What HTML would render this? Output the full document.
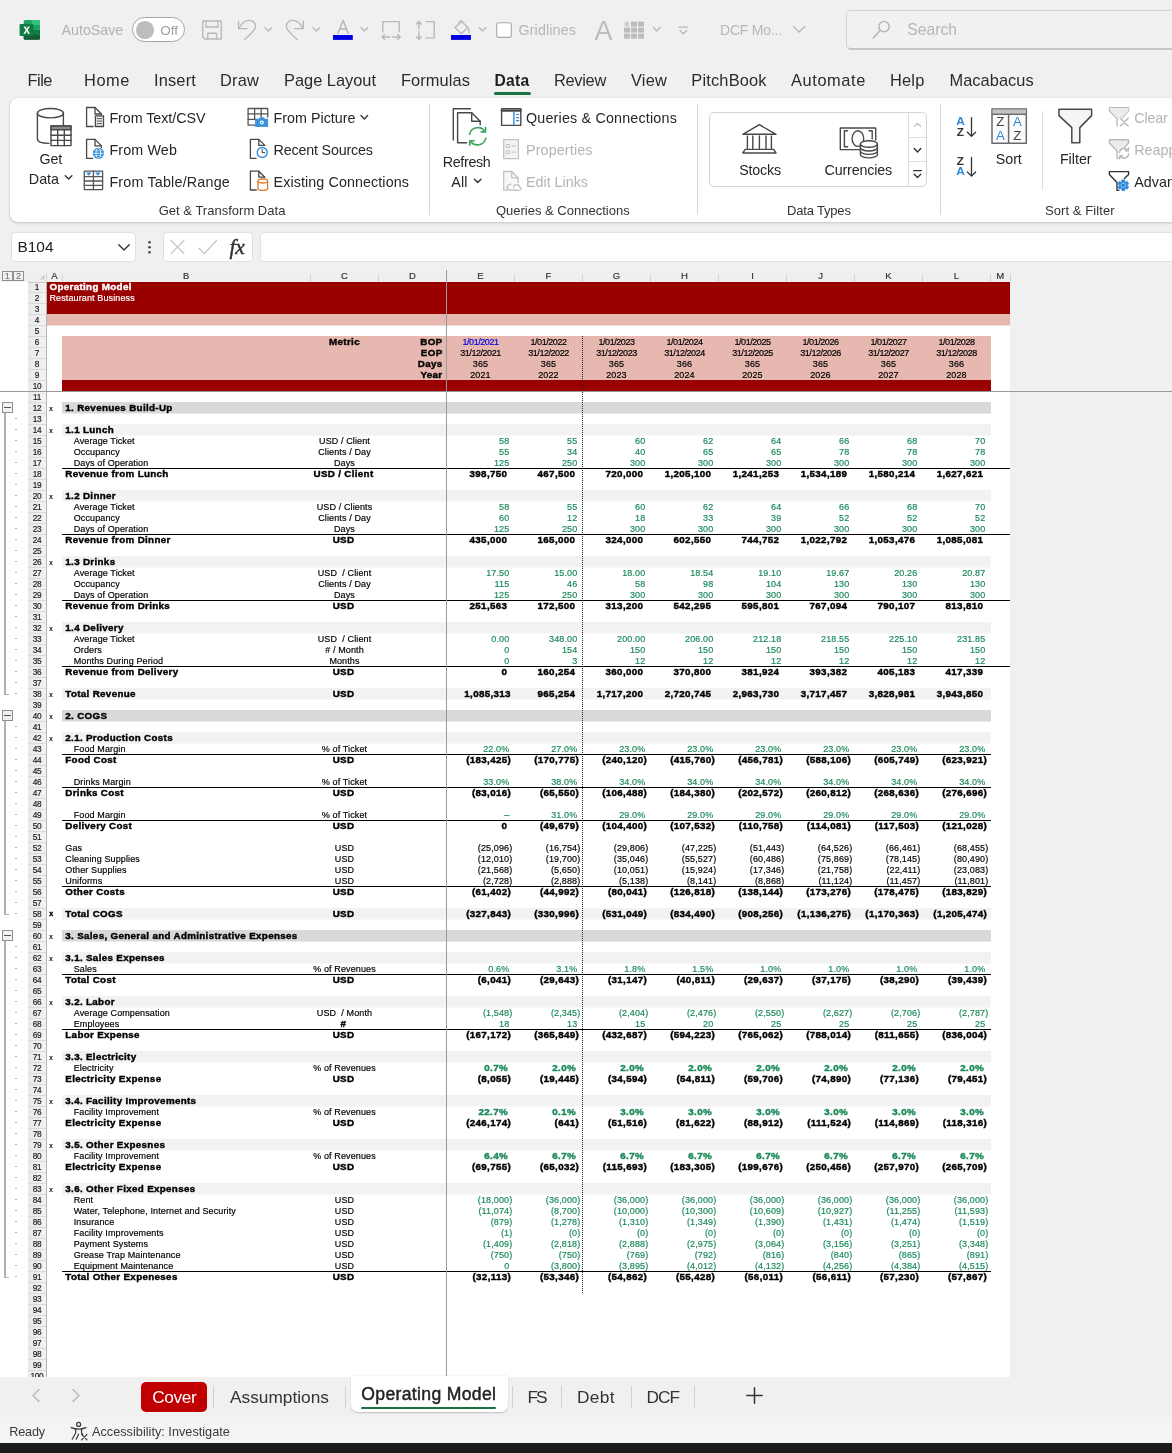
<!DOCTYPE html>
<html><head><meta charset="utf-8"><title>Excel</title>
<style>
html,body{margin:0;padding:0;}
body{width:1172px;height:1453px;overflow:hidden;background:#f0f0f0;font-family:"Liberation Sans",sans-serif;}
#app{position:relative;width:1172px;height:1453px;overflow:hidden;background:#f0f0f0;}
#sheet{position:absolute;left:0;top:0;width:1172px;height:1377px;overflow:hidden;pointer-events:none;}
.bx{position:absolute;}
.t{position:absolute;height:11px;line-height:11px;font-size:9px;letter-spacing:0.12px;white-space:nowrap;color:#000;overflow:visible;margin-top:0.8px;-webkit-text-stroke:0.18px currentColor;}
.t.b{font-weight:bold;font-size:9.8px;letter-spacing:0.33px;margin-top:0px;-webkit-text-stroke:0.42px currentColor;}
.t.c{text-align:center;}
.t.r{text-align:right;}
.t.w{color:#fff;}
.t.g{color:#1b8a5a;}
.t.blue{color:#0000e6;}
.t.ch{text-align:center;font-size:9.5px;color:#333;letter-spacing:0;}
.t.rh{text-align:center;font-size:8.3px;color:#222;letter-spacing:-0.35px;}
.t.xs{font-size:7px;letter-spacing:0;}
.t.ol{text-align:center;font-size:8.5px;color:#777;letter-spacing:0;}
.rt{position:absolute;white-space:nowrap;}
.t.dt{letter-spacing:-0.45px;}
#app{will-change:transform;}

</style></head><body>
<div id="app">
<div class="rt" style="left:61.60px;top:22.85px;font-size:14.30px;line-height:14.30px;color:#b2b2b2;letter-spacing:-0.039px;">AutoSave</div>
<div class="bx" style="left:132.20px;top:16.90px;width:53.10px;height:24.70px;box-sizing:border-box;border:1.3px solid #a6a6a6;border-radius:13px;background:#fff;"></div>
<div class="bx" style="left:136.20px;top:21.00px;width:17.60px;height:17.60px;border-radius:50%;background:#bdbdbd;"></div>
<div class="rt" style="left:160.30px;top:23.70px;font-size:13.60px;line-height:13.60px;color:#a0a0a0;letter-spacing:-0.063px;">Off</div>
<div class="rt" style="left:518.50px;top:22.85px;font-size:14.30px;line-height:14.30px;color:#b6b6b6;letter-spacing:0.119px;">Gridlines</div>
<div class="rt" style="left:594.50px;top:17.50px;font-size:27.00px;line-height:27.00px;color:#bcbcbc;letter-spacing:-0.910px;">A</div>
<div class="rt" style="left:720.00px;top:23.00px;font-size:14.00px;line-height:14.00px;color:#b8b8b8;letter-spacing:-0.198px;">DCF Mo...</div>
<div class="bx" style="left:846.00px;top:10.20px;width:344.00px;height:40.20px;box-sizing:border-box;border:1px solid #d4d4d4;border-bottom:2px solid #c6c6c6;border-radius:5px;background:#f1f1f1;"></div>
<div class="rt" style="left:907.30px;top:21.66px;font-size:15.69px;line-height:15.69px;color:#b6b6b6;">Search</div>
<div class="rt" style="left:27.40px;top:71.80px;font-size:16.40px;line-height:16.40px;color:#2b2b2b;letter-spacing:-0.457px;">File</div>
<div class="rt" style="left:84.00px;top:71.80px;font-size:16.40px;line-height:16.40px;color:#2b2b2b;letter-spacing:0.563px;">Home</div>
<div class="rt" style="left:154.00px;top:71.80px;font-size:16.40px;line-height:16.40px;color:#2b2b2b;letter-spacing:0.164px;">Insert</div>
<div class="rt" style="left:220.00px;top:71.80px;font-size:16.40px;line-height:16.40px;color:#2b2b2b;letter-spacing:0.182px;">Draw</div>
<div class="rt" style="left:284.00px;top:71.80px;font-size:16.40px;line-height:16.40px;color:#2b2b2b;letter-spacing:-0.009px;">Page Layout</div>
<div class="rt" style="left:401.00px;top:71.80px;font-size:16.40px;line-height:16.40px;color:#2b2b2b;letter-spacing:0.081px;">Formulas</div>
<div class="rt" style="left:554.00px;top:71.80px;font-size:16.40px;line-height:16.40px;color:#2b2b2b;letter-spacing:-0.296px;">Review</div>
<div class="rt" style="left:631.00px;top:71.80px;font-size:16.40px;line-height:16.40px;color:#2b2b2b;letter-spacing:0.187px;">View</div>
<div class="rt" style="left:691.30px;top:71.80px;font-size:16.40px;line-height:16.40px;color:#2b2b2b;letter-spacing:0.184px;">PitchBook</div>
<div class="rt" style="left:791.00px;top:71.80px;font-size:16.40px;line-height:16.40px;color:#2b2b2b;letter-spacing:0.600px;">Automate</div>
<div class="rt" style="left:890.00px;top:71.80px;font-size:16.40px;line-height:16.40px;color:#2b2b2b;letter-spacing:0.192px;">Help</div>
<div class="rt" style="left:949.50px;top:71.80px;font-size:16.40px;line-height:16.40px;color:#2b2b2b;letter-spacing:0.048px;">Macabacus</div>
<div class="rt" style="left:494.50px;top:72.70px;font-size:15.60px;line-height:15.60px;color:#1f1f1f;font-weight:bold;letter-spacing:0.321px;">Data</div>
<div class="bx" style="left:494.00px;top:91.80px;width:37.00px;height:3.20px;background:#1a7343;border-radius:1.5px;"></div>
<div class="bx" style="left:10.00px;top:97.60px;width:1190.00px;height:124.40px;background:#fff;border-radius:8px;box-shadow:0 1px 3px rgba(0,0,0,0.18),0 0 1px rgba(0,0,0,0.12);"></div>
<div class="bx" style="left:428.50px;top:104.00px;width:1.00px;height:111.00px;background:#d6d6d6;"></div>
<div class="bx" style="left:697.10px;top:104.00px;width:1.00px;height:111.00px;background:#d6d6d6;"></div>
<div class="bx" style="left:939.90px;top:104.00px;width:1.00px;height:111.00px;background:#d6d6d6;"></div>
<div class="bx" style="left:1042.00px;top:111.00px;width:1.00px;height:79.00px;background:#dcdcdc;"></div>
<div class="rt" style="left:39.50px;top:151.85px;font-size:14.30px;line-height:14.30px;color:#262626;letter-spacing:-0.150px;">Get</div>
<div class="rt" style="left:28.80px;top:171.85px;font-size:14.30px;line-height:14.30px;color:#262626;letter-spacing:0.023px;">Data</div>
<div class="rt" style="left:109.40px;top:110.85px;font-size:14.30px;line-height:14.30px;color:#262626;letter-spacing:-0.045px;">From Text/CSV</div>
<div class="rt" style="left:109.40px;top:142.85px;font-size:14.30px;line-height:14.30px;color:#262626;letter-spacing:0.140px;">From Web</div>
<div class="rt" style="left:109.40px;top:174.85px;font-size:14.30px;line-height:14.30px;color:#262626;letter-spacing:0.201px;">From Table/Range</div>
<div class="rt" style="left:273.60px;top:110.85px;font-size:14.30px;line-height:14.30px;color:#262626;">From Picture</div>
<div class="rt" style="left:273.60px;top:142.85px;font-size:14.30px;line-height:14.30px;color:#262626;letter-spacing:-0.182px;">Recent Sources</div>
<div class="rt" style="left:273.60px;top:174.85px;font-size:14.30px;line-height:14.30px;color:#262626;letter-spacing:0.093px;">Existing Connections</div>
<div class="rt" style="left:158.70px;top:204.00px;font-size:13.00px;line-height:13.00px;color:#333;letter-spacing:0.013px;">Get &amp; Transform Data</div>
<div class="rt" style="left:442.70px;top:154.85px;font-size:14.30px;line-height:14.30px;color:#262626;letter-spacing:-0.325px;">Refresh</div>
<div class="rt" style="left:451.20px;top:174.85px;font-size:14.30px;line-height:14.30px;color:#262626;letter-spacing:0.236px;">All</div>
<div class="rt" style="left:526.00px;top:110.85px;font-size:14.30px;line-height:14.30px;color:#262626;letter-spacing:0.188px;">Queries &amp; Connections</div>
<div class="rt" style="left:526.00px;top:142.85px;font-size:14.30px;line-height:14.30px;color:#b4b4b4;letter-spacing:0.142px;">Properties</div>
<div class="rt" style="left:526.00px;top:174.85px;font-size:14.30px;line-height:14.30px;color:#b4b4b4;">Edit Links</div>
<div class="rt" style="left:495.90px;top:204.00px;font-size:13.00px;line-height:13.00px;color:#333;letter-spacing:0.005px;">Queries &amp; Connections</div>
<div class="bx" style="left:709.20px;top:112.20px;width:217.70px;height:74.40px;box-sizing:border-box;border:1px solid #d4d4d4;border-radius:5px;background:#fff;"></div>
<div class="bx" style="left:908.00px;top:112.70px;width:1.00px;height:73.30px;background:#dcdcdc;"></div>
<div class="bx" style="left:908.50px;top:137.30px;width:17.90px;height:1.00px;background:#dcdcdc;"></div>
<div class="bx" style="left:908.50px;top:161.40px;width:17.90px;height:1.00px;background:#dcdcdc;"></div>
<div class="rt" style="left:739.30px;top:162.85px;font-size:14.30px;line-height:14.30px;color:#262626;letter-spacing:-0.219px;">Stocks</div>
<div class="rt" style="left:824.50px;top:162.85px;font-size:14.30px;line-height:14.30px;color:#262626;letter-spacing:-0.154px;">Currencies</div>
<div class="rt" style="left:787.00px;top:204.00px;font-size:13.00px;line-height:13.00px;color:#333;letter-spacing:-0.182px;">Data Types</div>
<div class="rt" style="left:995.80px;top:151.85px;font-size:14.30px;line-height:14.30px;color:#262626;letter-spacing:-0.057px;">Sort</div>
<div class="rt" style="left:1059.90px;top:151.85px;font-size:14.30px;line-height:14.30px;color:#262626;letter-spacing:-0.013px;">Filter</div>
<div class="rt" style="left:1134.30px;top:110.85px;font-size:14.30px;line-height:14.30px;color:#b4b4b4;letter-spacing:-0.175px;">Clear</div>
<div class="rt" style="left:1134.30px;top:142.85px;font-size:14.30px;line-height:14.30px;color:#b4b4b4;">Reapply</div>
<div class="rt" style="left:1134.30px;top:174.85px;font-size:14.30px;line-height:14.30px;color:#262626;">Advanced</div>
<div class="rt" style="left:1045.00px;top:204.00px;font-size:13.00px;line-height:13.00px;color:#333;letter-spacing:0.075px;">Sort &amp; Filter</div>
<div class="bx" style="left:11.00px;top:232.30px;width:125.00px;height:29.70px;box-sizing:border-box;border:1px solid #e1e1e1;border-radius:4px;background:#fff;"></div>
<div class="rt" style="left:17.50px;top:238.79px;font-size:15.41px;line-height:15.41px;color:#222;">B104</div>
<div class="bx" style="left:162.50px;top:232.30px;width:90.50px;height:29.70px;box-sizing:border-box;border:1px solid #e1e1e1;border-radius:4px;background:#fff;"></div>
<div class="bx" style="left:260.00px;top:232.30px;width:930.00px;height:29.70px;box-sizing:border-box;border:1px solid #e1e1e1;border-radius:4px;background:#fff;"></div>
<div class="rt" style="left:229.5px;top:234.5px;font-family:'Liberation Serif',serif;font-style:italic;font-weight:normal;-webkit-text-stroke:0.45px #333;font-size:21.5px;line-height:24px;color:#333;letter-spacing:-0.3px;">fx</div>
<svg class="bx" style="left:0;top:0" width="1172" height="270" viewBox="0 0 1172 270" fill="none" stroke-linecap="round" stroke-linejoin="round">
<defs>
<linearGradient id="xg" x1="0" y1="0" x2="1" y2="1"><stop offset="0" stop-color="#21a366"/><stop offset="1" stop-color="#107c41"/></linearGradient>
</defs>
<!-- Excel logo -->
<g stroke="none">
<rect x="23.7" y="20" width="16.3" height="19.7" rx="1.6" fill="#21a366"/>
<rect x="31.8" y="20" width="8.2" height="5" fill="#33c481"/>
<rect x="23.7" y="25" width="8.1" height="5" fill="#107c41"/>
<rect x="31.8" y="30" width="8.2" height="5" fill="#107c41"/>
<rect x="23.7" y="30" width="8.1" height="5" fill="#185c37"/>
<rect x="23.7" y="35" width="16.3" height="4.7" rx="1" fill="#185c37"/>
<rect x="19.6" y="24.1" width="13.9" height="11.9" rx="1.2" fill="#107c41"/>
<path d="M23.6 26.4h2l1.2 2.3 1.2-2.3h1.9l-2.1 3.6 2.2 3.7h-2l-1.3-2.5-1.3 2.5h-1.9l2.2-3.7z" fill="#fff"/>
</g>
<!-- QAT icons (disabled grey) -->
<g stroke="#b9b9b9" stroke-width="1.4">
<!-- save -->
<path d="M202.7 21h18.6v18h-16.6l-2-2z"/><path d="M206 21v6h12v-6"/><path d="M207.7 39v-5.8h8.9v5.8"/>
<!-- undo -->
<path d="M238.6 21.2v7.4h8.6"/><path d="M239.4 27.6c2.5-4.6 6.8-7.6 10.6-7.2 3.6.4 6.2 3.4 5.3 7.2-.7 3-5 6.700-10.6 12"/>
<path d="M265 27.8l3.400 3.300 3.400-3.300"/>
<!-- redo -->
<path d="M303.300 21.200v7.400h-8.600"/><path d="M302.500 27.600c-2.500-4.600-6.800-7.600-10.600-7.200-3.600.4-6.200 3.400-5.300 7.200.7 3 5 6.700 10.600 12"/>
<path d="M313 27.800l3.400 3.300 3.400-3.300"/>
<!-- font color A chevron -->
<path d="M361 27.600l3.400 3.300 3.400-3.300"/>
<!-- autofit col -->
<path d="M382.800 31.800v-10.200h16.400v10.200"/><path d="M382 37h7.800M384.600 34.600l-2.600 2.400 2.600 2.400"/><path d="M400.200 37h-7.800M397.600 34.600l2.600 2.400-2.600 2.400"/>
<!-- autofit row -->
<path d="M426 21.600h8.200v16.300h-8.200"/><path d="M418.900 21.400v7.600M416.500 24l2.400-2.600 2.400 2.600"/><path d="M418.900 39.400v-7.600M416.500 36.800l2.400 2.600 2.400-2.600"/>
<!-- paint bucket -->
<path d="M461.500 21.200l6.200 6.400-6.400 6.200-6.200-6.300z"/><path d="M458.800 24.200c-.6-2.600 2.600-4.400 3.800-2.200"/><path d="M467.900 27.800c1.200 1.600 1.800 3 1.200 4.800"/>
<path d="M479.200 27.600l3.400 3.300 3.400-3.300"/>
<!-- grid chevron -->
<path d="M653.500 27.600l3.300 3.300 3.300-3.300"/>
<!-- customize -->
<path d="M678.800 27.100h9"/><path d="M680 30.400l3.300 3.300 3.300-3.300"/>
<!-- dcf chevron -->
<path d="M793.500 26.600l5.600 5.400 5.600-5.400"/>
</g>
<!-- font colour A -->
<path d="M338 33.400l5.100-12.900 5.200 12.900M339.900 29h6.600" stroke="#b4b4b4" stroke-width="1.4"/>
<rect x="333" y="35" width="19.800" height="4.900" fill="#0000e0" stroke="none"/>
<rect x="451" y="35" width="19.900" height="4.900" fill="#0000e0" stroke="none"/>
<!-- checkbox -->
<rect x="496.700" y="22.800" width="14.600" height="14.600" rx="2.500" fill="#fff" stroke="#a8a8a8" stroke-width="1.100"/>
<!-- grid icon -->
<g fill="#bdbdbd" stroke="none">
<rect x="631" y="21.600" width="6" height="5"/><rect x="638" y="21.600" width="6" height="5"/>
<rect x="624" y="27.600" width="6" height="5"/><rect x="631" y="27.600" width="6" height="5"/><rect x="638" y="27.600" width="6" height="5"/>
<rect x="624" y="33.600" width="6" height="5.100"/><rect x="631" y="33.600" width="6" height="5.100"/><rect x="638" y="33.600" width="6" height="5.100"/>
</g>
<path d="M627 21.400v5.400M624.600 22.700l4.800 2.800M629.400 22.700l-4.800 2.800" stroke="#bdbdbd" stroke-width="1"/>
<!-- search icon -->
<g stroke="#b3b3b3" stroke-width="1.400"><circle cx="884" cy="26.600" r="5.200"/><path d="M880.200 30.600l-7 7.400"/></g>

<!-- ===== Ribbon icons ===== -->
<!-- Get Data -->
<g stroke="#484848" stroke-width="1.400">
<ellipse cx="50.400" cy="113.200" rx="13" ry="4.700" fill="#fff"/>
<path d="M37.400 113.200v26c0 2.200 4.600 3.900 11.600 4.200"/><path d="M63.400 113.200v12.400"/>
<rect x="51" y="126" width="20" height="19.600" fill="#fff"/>
<rect x="51" y="126" width="20" height="3.800" fill="#8a8a8a"/>
<path d="M51 135.200h20M51 140.400h20M57.700 130v15.600M64.300 130v15.600"/>
</g>
<path d="M65.300 175.800l3.300 3.300 3.300-3.300" stroke="#333" stroke-width="1.400"/>
<!-- From Text/CSV -->
<g stroke="#484848" stroke-width="1.300">
<path d="M93.200 126.500h-6.600v-19h8.400l6.400 6.500v1.800"/><path d="M95 107.500v6.500h6.400"/>
<rect x="95.400" y="115.800" width="8.100" height="10.700" fill="#e6e6e6"/>
<path d="M97.300 118.600h4.300M97.300 121.100h4.300M97.300 123.600h4.300" stroke-width=".9"/>
</g>
<!-- From Web -->
<g stroke="#484848" stroke-width="1.300">
<path d="M92.600 158.400h-6v-19h8.400l6.400 6.500v1.500"/><path d="M95 139.400v6.500h6.400"/>
</g>
<circle cx="98.400" cy="153.300" r="5.600" fill="#2b88d8" stroke="none"/>
<g stroke="#fff" stroke-width=".8"><ellipse cx="98.400" cy="153.300" rx="2.400" ry="4.700"/><path d="M93.600 153.300h9.600"/><path d="M94.600 150.400c2.400.9 5.200.9 7.600 0M94.600 156.200c2.400-.9 5.200-.9 7.600 0" stroke-width=".6"/></g>
<!-- From Table/Range -->
<g stroke="#555" stroke-width="1.300">
<rect x="84.300" y="171.200" width="18.300" height="18.400" fill="#fff"/>
<path d="M84.300 176.600h18.300M84.300 181h18.300M84.300 185.300h18.300M93.400 171.200v18.400"/>
</g>
<path d="M86.800 172.800h4.200l-2.100 2.400zM95.900 172.800h4.200l-2.100 2.400z" fill="#2b88d8" stroke="#2b88d8" stroke-width=".6"/>
<!-- From Picture -->
<g stroke="#555" stroke-width="1.300">
<path d="M267.700 117v-8.500h-19.600v16.700h7"/><path d="M248.100 113.800h19.600M248.100 119.400h8M254.600 108.500v11M261.200 108.500v8.500"/>
</g>
<path d="M255.800 119.200h3l1-1.400h4l1 1.400h2.900v7.300h-11.900z" fill="#3c93dc" stroke="#2b88d8" stroke-width=".8"/>
<circle cx="261.800" cy="122.600" r="2" fill="#fff" stroke="none"/><circle cx="261.800" cy="122.600" r=".9" fill="#3c93dc" stroke="none"/>
<path d="M273 0" />
<path d="M361 115.600l3.300 3.300 3.300-3.300" stroke="#333" stroke-width="1.400"/>
<!-- Recent Sources -->
<g stroke="#484848" stroke-width="1.300">
<path d="M256 158.400h-5.600v-19h8.400l5.900 6"/><path d="M258.800 139.400v6h5.900"/>
</g>
<circle cx="262.200" cy="152.500" r="5" fill="#fff" stroke="#2b88d8" stroke-width="1.300"/>
<path d="M262.200 149.600v3.100h2.600" stroke="#333" stroke-width="1"/>
<!-- Existing Connections -->
<g stroke="#484848" stroke-width="1.300">
<path d="M256.400 190h-6v-18.800h8.400l5.900 6"/><path d="M258.800 171.200v6h5.900"/>
</g>
<g stroke="#e07b28" stroke-width="1.300">
<path d="M258 181v7.400c0 1.100 2.100 2 4.800 2s4.800-.9 4.800-2v-7.400z" fill="#fff"/><ellipse cx="262.800" cy="181" rx="4.800" ry="2" fill="#fff"/>
</g>
<!-- Refresh All -->
<g stroke="#484848" stroke-width="1.400">
<path d="M470.400 108.800h-17.100v31.300"/>
<path d="M466.600 142.700h-9v-29.900h14.100l8.500 8.500v3.400"/><path d="M471.700 112.800v8.500h8.500"/>
</g>
<g stroke="#3da35d" stroke-width="1.600">
<path d="M469.600 134.200a8.500 8.500 0 0 1 15.400-2.600"/><path d="M485.800 138.400a8.500 8.500 0 0 1-15.400 2.600"/>
<path d="M485.600 127.500v4.400h-4.400"/><path d="M469.800 145.100v-4.400h4.400"/>
</g>
<path d="M474.400 179.200l3.300 3.300 3.300-3.300" stroke="#333" stroke-width="1.400"/>
<!-- Queries & Connections -->
<g stroke="#484848" stroke-width="1.400">
<rect x="501.600" y="108.700" width="19.200" height="16.700" fill="#fff"/><path d="M501.600 110.600h19.200" stroke-width="2.200"/>
</g>
<path d="M513.900 111.800v13" stroke="#2b88d8" stroke-width="1.400"/>
<path d="M516.500 114.500h2.200M516.500 117.600h2.200M516.500 120.700h2.200" stroke="#2b88d8" stroke-width="1.200"/>
<!-- Properties (disabled) -->
<g stroke="#c2c2c2" stroke-width="1.300">
<rect x="503.700" y="139.600" width="14.700" height="19" fill="#f4f4f4"/>
<rect x="506.600" y="144.600" width="3" height="3" stroke-width="1"/><rect x="506.600" y="150.600" width="3" height="3" stroke-width="1"/>
<path d="M512 146.100h3.400M512 152.100h3.400" stroke-width="1"/>
</g>
<!-- Edit Links (disabled) -->
<g stroke="#c2c2c2" stroke-width="1.300">
<path d="M507 190.200h-3.300v-18.700h8l6.400 6.300v5" fill="#f7f7f7"/><path d="M511.700 171.500v6.300h6.400"/>
<path d="M511 184.200c-2.600-.2-3.800 1.400-3.800 2.900s1.200 2.900 3.400 2.900h5.600"/><path d="M513.600 187.600c0-1.800 1.400-3 3-3s3 1 3 2.600c1.200.2 1.600.8 1.600 1.600s-.8 1.500-2 1.500h-3"/>
</g>
<!-- gallery arrows -->
<path d="M914.200 126.600l3.300-3.300 3.300 3.300" stroke="#c4c4c4" stroke-width="1.300"/>
<path d="M914.200 148.600l3.300 3.300 3.300-3.300" stroke="#333" stroke-width="1.400"/>
<path d="M913.600 170.600h7.800M914.200 174.200l3.300 3.300 3.300-3.300" stroke="#333" stroke-width="1.300"/>
<!-- Stocks -->
<g stroke="#484848" stroke-width="1.400">
<path d="M742.800 134.300l16.600-9.600 16.600 9.600z" fill="#fff"/>
<path d="M747.400 136v12.400M752.800 136v12.400M759.400 136v12.400M766 136v12.400M771.400 136v12.400"/>
<path d="M745.200 149.400h28.400M742.800 153h33.200M742.800 153l2.400-3.600M776 153l-2.400-3.600"/>
</g>
<!-- Currencies -->
<g stroke="#484848" stroke-width="1.400">
<path d="M860 149.600h-19.700v-21.600h35.400v12"/>
<path d="M847.600 130.800h-3.200v16h3.200M869 130.800h3.200v8"/>
<ellipse cx="857.900" cy="138.600" rx="5.800" ry="7.800"/>
<path d="M860.400 144v10.400c0 1.900 3.800 3.500 8.500 3.500s8.500-1.600 8.500-3.500v-10.400" fill="#fff"/>
<ellipse cx="868.900" cy="144" rx="8.500" ry="3.300" fill="#fff"/>
<path d="M860.400 147.600c0 1.900 3.800 3.400 8.500 3.400s8.500-1.500 8.500-3.400M860.400 151c0 1.900 3.800 3.400 8.500 3.400s8.500-1.500 8.500-3.400"/>
</g>
<!-- sort arrows -->
<g stroke="#333" stroke-width="1.300">
<path d="M971.500 117.600v18.400M967.400 132.200l4.100 4.100 4.100-4.100"/>
<path d="M971.500 157.400v18.400M967.400 172l4.100 4.100 4.100-4.100"/>
</g>
<!-- Sort big -->
<g stroke="#6a6a6a" stroke-width="1.500">
<rect x="992" y="109" width="34.300" height="34.300" fill="#fcfcfc"/>
<rect x="992.700" y="109.700" width="32.900" height="4" fill="#c4c4c4" stroke="none"/>
<path d="M992 114.200h34.300M1008.600 114.200v29"/>
</g>
<!-- Filter -->
<path d="M1059 109.300h32.600v6.300l-11.800 12v15.100h-8v-15.100l-12.800-12z" fill="#f5f5f5" stroke="#484848" stroke-width="1.500"/>
<!-- Clear -->
<g stroke="#bababa" stroke-width="1.400">
<path d="M1109.500 107.600h19v3.200l-6 6.400M1109.500 107.600v3.200l7.600 8v7.200" fill="none"/>
<path d="M1110 108h18.400v2.600l-7 7.600h-4l-7.400-7.600z" fill="#ececec" stroke="none"/>
<path d="M1120.400 118.200l7.800 7.800M1128.200 118.200l-7.800 7.800"/>
</g>
<!-- Reapply -->
<g stroke="#bababa" stroke-width="1.400">
<path d="M1110 140.200h18.400v2.600l-7 7.600h-4l-7.400-7.600z" fill="#ececec" stroke="none"/>
<path d="M1109.500 139.800h19v3.200l-4 4.200M1109.500 139.800v3.200l7.600 8v7.400h1.600"/>
<path d="M1119.400 152.600a4.600 4.600 0 0 1 8.400-2M1128.600 153.800a4.600 4.600 0 0 1-8.400 2.400"/><path d="M1128.400 147.800v3h-3M1119.800 158.800v-3h3"/>
</g>
<!-- Advanced -->
<g stroke="#333" stroke-width="1.400">
<path d="M1124.400 178.600L1128.600 174.400V171.600H1109.400V174.400L1117 182.600V190.400H1118.800"/>
</g>
<g stroke="none">
<path d="M1121.78 180.01L1124.82 180.01L1124.70 181.66L1125.75 182.27L1127.12 181.34L1128.64 183.97L1127.15 184.69L1127.15 185.91L1128.64 186.63L1127.12 189.26L1125.75 188.33L1124.70 188.94L1124.82 190.59L1121.78 190.59L1121.90 188.94L1120.85 188.33L1119.48 189.26L1117.96 186.63L1119.45 185.91L1119.45 184.69L1117.96 183.97L1119.48 181.34L1120.85 182.27L1121.90 181.66z" fill="#2b88d8" stroke="#2b88d8" stroke-width=".8" stroke-linejoin="round"/>
<circle cx="1123.3" cy="185.3" r="2.7" fill="#6db6ee"/>
<circle cx="1123.3" cy="185.3" r="1.2" fill="#1a6fb8"/>
</g>
<!-- formula bar icons -->
<path d="M118.800 244.800l5.200 5.100 5.200-5.100" stroke="#333" stroke-width="1.400"/>
<g fill="#444" stroke="none"><circle cx="149.500" cy="242.300" r="1.300"/><circle cx="149.500" cy="247.300" r="1.300"/><circle cx="149.500" cy="252.300" r="1.300"/></g>
<path d="M171 240.400l13 13.200M184 240.400l-13 13.200" stroke="#c2c2c2" stroke-width="1.300"/>
<path d="M199 248.200l5.400 5.400 12-13" stroke="#c2c2c2" stroke-width="1.300"/>
</svg>

<div class="rt" style="left:950.40px;width:20px;text-align:center;top:116.10px;font-size:11.8px;line-height:11.8px;color:#2b88d8;font-weight:bold;">A</div>
<div class="rt" style="left:950.40px;width:20px;text-align:center;top:127.10px;font-size:11.8px;line-height:11.8px;color:#333;font-weight:bold;">Z</div>
<div class="rt" style="left:950.40px;width:20px;text-align:center;top:156.10px;font-size:11.8px;line-height:11.8px;color:#333;font-weight:bold;">Z</div>
<div class="rt" style="left:950.40px;width:20px;text-align:center;top:166.10px;font-size:11.8px;line-height:11.8px;color:#2b88d8;font-weight:bold;">A</div>
<div class="rt" style="left:990.30px;width:20px;text-align:center;top:114.90px;font-size:13.2px;line-height:13.2px;color:#444;">Z</div>
<div class="rt" style="left:990.30px;width:20px;text-align:center;top:128.90px;font-size:13.2px;line-height:13.2px;color:#2b88d8;">A</div>
<div class="rt" style="left:1007.40px;width:20px;text-align:center;top:114.90px;font-size:13.2px;line-height:13.2px;color:#2b88d8;">A</div>
<div class="rt" style="left:1007.40px;width:20px;text-align:center;top:128.90px;font-size:13.2px;line-height:13.2px;color:#444;">Z</div>
<div id="sheet">
<div class="bx" style="left:0px;top:282px;width:1010px;height:1095px;background:#fff;"></div>
<div class="bx" style="left:27.5px;top:270px;width:982.5px;height:12px;background:#fff;"></div>
<div class="bx" style="left:27.5px;top:270px;width:982.5px;height:12px;background:#efefef;"></div>
<div class="bx" style="left:27.5px;top:282px;width:19px;height:1095px;background:linear-gradient(90deg,#e9e9e9,#f3f3f3);"></div>
<div class="t ch" style="left:47px;top:269.6px;width:15px;">A</div>
<div class="bx" style="left:61.5px;top:274px;width:1px;height:8px;background:#d4d4d4;"></div>
<div class="t ch" style="left:62px;top:269.6px;width:248.5px;">B</div>
<div class="bx" style="left:310px;top:274px;width:1px;height:8px;background:#d4d4d4;"></div>
<div class="t ch" style="left:310.5px;top:269.6px;width:68px;">C</div>
<div class="bx" style="left:378px;top:274px;width:1px;height:8px;background:#d4d4d4;"></div>
<div class="t ch" style="left:378.5px;top:269.6px;width:68px;">D</div>
<div class="bx" style="left:446px;top:274px;width:1px;height:8px;background:#d4d4d4;"></div>
<div class="t ch" style="left:446.5px;top:269.6px;width:68px;">E</div>
<div class="bx" style="left:514px;top:274px;width:1px;height:8px;background:#d4d4d4;"></div>
<div class="t ch" style="left:514.5px;top:269.6px;width:68px;">F</div>
<div class="bx" style="left:582px;top:274px;width:1px;height:8px;background:#d4d4d4;"></div>
<div class="t ch" style="left:582.5px;top:269.6px;width:68px;">G</div>
<div class="bx" style="left:650px;top:274px;width:1px;height:8px;background:#d4d4d4;"></div>
<div class="t ch" style="left:650.5px;top:269.6px;width:68px;">H</div>
<div class="bx" style="left:718px;top:274px;width:1px;height:8px;background:#d4d4d4;"></div>
<div class="t ch" style="left:718.5px;top:269.6px;width:68px;">I</div>
<div class="bx" style="left:786px;top:274px;width:1px;height:8px;background:#d4d4d4;"></div>
<div class="t ch" style="left:786.5px;top:269.6px;width:68px;">J</div>
<div class="bx" style="left:854px;top:274px;width:1px;height:8px;background:#d4d4d4;"></div>
<div class="t ch" style="left:854.5px;top:269.6px;width:68px;">K</div>
<div class="bx" style="left:922px;top:274px;width:1px;height:8px;background:#d4d4d4;"></div>
<div class="t ch" style="left:922.5px;top:269.6px;width:68px;">L</div>
<div class="bx" style="left:990px;top:274px;width:1px;height:8px;background:#d4d4d4;"></div>
<div class="t ch" style="left:990.5px;top:269.6px;width:19.5px;">M</div>
<div class="bx" style="left:1009.5px;top:274px;width:1px;height:8px;background:#d4d4d4;"></div>
<div class="bx" style="left:46px;top:274px;width:1px;height:8px;background:#d4d4d4;"></div>
<div class="t rh" style="left:27.5px;top:281px;width:19px;">1</div>
<div class="bx" style="left:27.5px;top:291.5px;width:18.5px;height:1px;background:#dadada;"></div>
<div class="t rh" style="left:27.5px;top:292px;width:19px;">2</div>
<div class="bx" style="left:27.5px;top:302.5px;width:18.5px;height:1px;background:#dadada;"></div>
<div class="t rh" style="left:27.5px;top:303px;width:19px;">3</div>
<div class="bx" style="left:27.5px;top:313.5px;width:18.5px;height:1px;background:#dadada;"></div>
<div class="t rh" style="left:27.5px;top:314px;width:19px;">4</div>
<div class="bx" style="left:27.5px;top:324.5px;width:18.5px;height:1px;background:#dadada;"></div>
<div class="t rh" style="left:27.5px;top:325px;width:19px;">5</div>
<div class="bx" style="left:27.5px;top:335.5px;width:18.5px;height:1px;background:#dadada;"></div>
<div class="t rh" style="left:27.5px;top:336px;width:19px;">6</div>
<div class="bx" style="left:27.5px;top:346.5px;width:18.5px;height:1px;background:#dadada;"></div>
<div class="t rh" style="left:27.5px;top:347px;width:19px;">7</div>
<div class="bx" style="left:27.5px;top:357.5px;width:18.5px;height:1px;background:#dadada;"></div>
<div class="t rh" style="left:27.5px;top:358px;width:19px;">8</div>
<div class="bx" style="left:27.5px;top:368.5px;width:18.5px;height:1px;background:#dadada;"></div>
<div class="t rh" style="left:27.5px;top:369px;width:19px;">9</div>
<div class="bx" style="left:27.5px;top:379.5px;width:18.5px;height:1px;background:#dadada;"></div>
<div class="t rh" style="left:27.5px;top:380px;width:19px;">10</div>
<div class="bx" style="left:27.5px;top:390.5px;width:18.5px;height:1px;background:#dadada;"></div>
<div class="t rh" style="left:27.5px;top:391px;width:19px;">11</div>
<div class="bx" style="left:27.5px;top:401.5px;width:18.5px;height:1px;background:#dadada;"></div>
<div class="t rh" style="left:27.5px;top:402px;width:19px;">12</div>
<div class="bx" style="left:27.5px;top:412.5px;width:18.5px;height:1px;background:#dadada;"></div>
<div class="t rh" style="left:27.5px;top:413px;width:19px;">13</div>
<div class="bx" style="left:27.5px;top:423.5px;width:18.5px;height:1px;background:#dadada;"></div>
<div class="t rh" style="left:27.5px;top:424px;width:19px;">14</div>
<div class="bx" style="left:27.5px;top:434.5px;width:18.5px;height:1px;background:#dadada;"></div>
<div class="t rh" style="left:27.5px;top:435px;width:19px;">15</div>
<div class="bx" style="left:27.5px;top:445.5px;width:18.5px;height:1px;background:#dadada;"></div>
<div class="t rh" style="left:27.5px;top:446px;width:19px;">16</div>
<div class="bx" style="left:27.5px;top:456.5px;width:18.5px;height:1px;background:#dadada;"></div>
<div class="t rh" style="left:27.5px;top:457px;width:19px;">17</div>
<div class="bx" style="left:27.5px;top:467.5px;width:18.5px;height:1px;background:#dadada;"></div>
<div class="t rh" style="left:27.5px;top:468px;width:19px;">18</div>
<div class="bx" style="left:27.5px;top:478.5px;width:18.5px;height:1px;background:#dadada;"></div>
<div class="t rh" style="left:27.5px;top:479px;width:19px;">19</div>
<div class="bx" style="left:27.5px;top:489.5px;width:18.5px;height:1px;background:#dadada;"></div>
<div class="t rh" style="left:27.5px;top:490px;width:19px;">20</div>
<div class="bx" style="left:27.5px;top:500.5px;width:18.5px;height:1px;background:#dadada;"></div>
<div class="t rh" style="left:27.5px;top:501px;width:19px;">21</div>
<div class="bx" style="left:27.5px;top:511.5px;width:18.5px;height:1px;background:#dadada;"></div>
<div class="t rh" style="left:27.5px;top:512px;width:19px;">22</div>
<div class="bx" style="left:27.5px;top:522.5px;width:18.5px;height:1px;background:#dadada;"></div>
<div class="t rh" style="left:27.5px;top:523px;width:19px;">23</div>
<div class="bx" style="left:27.5px;top:533.5px;width:18.5px;height:1px;background:#dadada;"></div>
<div class="t rh" style="left:27.5px;top:534px;width:19px;">24</div>
<div class="bx" style="left:27.5px;top:544.5px;width:18.5px;height:1px;background:#dadada;"></div>
<div class="t rh" style="left:27.5px;top:545px;width:19px;">25</div>
<div class="bx" style="left:27.5px;top:555.5px;width:18.5px;height:1px;background:#dadada;"></div>
<div class="t rh" style="left:27.5px;top:556px;width:19px;">26</div>
<div class="bx" style="left:27.5px;top:566.5px;width:18.5px;height:1px;background:#dadada;"></div>
<div class="t rh" style="left:27.5px;top:567px;width:19px;">27</div>
<div class="bx" style="left:27.5px;top:577.5px;width:18.5px;height:1px;background:#dadada;"></div>
<div class="t rh" style="left:27.5px;top:578px;width:19px;">28</div>
<div class="bx" style="left:27.5px;top:588.5px;width:18.5px;height:1px;background:#dadada;"></div>
<div class="t rh" style="left:27.5px;top:589px;width:19px;">29</div>
<div class="bx" style="left:27.5px;top:599.5px;width:18.5px;height:1px;background:#dadada;"></div>
<div class="t rh" style="left:27.5px;top:600px;width:19px;">30</div>
<div class="bx" style="left:27.5px;top:610.5px;width:18.5px;height:1px;background:#dadada;"></div>
<div class="t rh" style="left:27.5px;top:611px;width:19px;">31</div>
<div class="bx" style="left:27.5px;top:621.5px;width:18.5px;height:1px;background:#dadada;"></div>
<div class="t rh" style="left:27.5px;top:622px;width:19px;">32</div>
<div class="bx" style="left:27.5px;top:632.5px;width:18.5px;height:1px;background:#dadada;"></div>
<div class="t rh" style="left:27.5px;top:633px;width:19px;">33</div>
<div class="bx" style="left:27.5px;top:643.5px;width:18.5px;height:1px;background:#dadada;"></div>
<div class="t rh" style="left:27.5px;top:644px;width:19px;">34</div>
<div class="bx" style="left:27.5px;top:654.5px;width:18.5px;height:1px;background:#dadada;"></div>
<div class="t rh" style="left:27.5px;top:655px;width:19px;">35</div>
<div class="bx" style="left:27.5px;top:665.5px;width:18.5px;height:1px;background:#dadada;"></div>
<div class="t rh" style="left:27.5px;top:666px;width:19px;">36</div>
<div class="bx" style="left:27.5px;top:676.5px;width:18.5px;height:1px;background:#dadada;"></div>
<div class="t rh" style="left:27.5px;top:677px;width:19px;">37</div>
<div class="bx" style="left:27.5px;top:687.5px;width:18.5px;height:1px;background:#dadada;"></div>
<div class="t rh" style="left:27.5px;top:688px;width:19px;">38</div>
<div class="bx" style="left:27.5px;top:698.5px;width:18.5px;height:1px;background:#dadada;"></div>
<div class="t rh" style="left:27.5px;top:699px;width:19px;">39</div>
<div class="bx" style="left:27.5px;top:709.5px;width:18.5px;height:1px;background:#dadada;"></div>
<div class="t rh" style="left:27.5px;top:710px;width:19px;">40</div>
<div class="bx" style="left:27.5px;top:720.5px;width:18.5px;height:1px;background:#dadada;"></div>
<div class="t rh" style="left:27.5px;top:721px;width:19px;">41</div>
<div class="bx" style="left:27.5px;top:731.5px;width:18.5px;height:1px;background:#dadada;"></div>
<div class="t rh" style="left:27.5px;top:732px;width:19px;">42</div>
<div class="bx" style="left:27.5px;top:742.5px;width:18.5px;height:1px;background:#dadada;"></div>
<div class="t rh" style="left:27.5px;top:743px;width:19px;">43</div>
<div class="bx" style="left:27.5px;top:753.5px;width:18.5px;height:1px;background:#dadada;"></div>
<div class="t rh" style="left:27.5px;top:754px;width:19px;">44</div>
<div class="bx" style="left:27.5px;top:764.5px;width:18.5px;height:1px;background:#dadada;"></div>
<div class="t rh" style="left:27.5px;top:765px;width:19px;">45</div>
<div class="bx" style="left:27.5px;top:775.5px;width:18.5px;height:1px;background:#dadada;"></div>
<div class="t rh" style="left:27.5px;top:776px;width:19px;">46</div>
<div class="bx" style="left:27.5px;top:786.5px;width:18.5px;height:1px;background:#dadada;"></div>
<div class="t rh" style="left:27.5px;top:787px;width:19px;">47</div>
<div class="bx" style="left:27.5px;top:797.5px;width:18.5px;height:1px;background:#dadada;"></div>
<div class="t rh" style="left:27.5px;top:798px;width:19px;">48</div>
<div class="bx" style="left:27.5px;top:808.5px;width:18.5px;height:1px;background:#dadada;"></div>
<div class="t rh" style="left:27.5px;top:809px;width:19px;">49</div>
<div class="bx" style="left:27.5px;top:819.5px;width:18.5px;height:1px;background:#dadada;"></div>
<div class="t rh" style="left:27.5px;top:820px;width:19px;">50</div>
<div class="bx" style="left:27.5px;top:830.5px;width:18.5px;height:1px;background:#dadada;"></div>
<div class="t rh" style="left:27.5px;top:831px;width:19px;">51</div>
<div class="bx" style="left:27.5px;top:841.5px;width:18.5px;height:1px;background:#dadada;"></div>
<div class="t rh" style="left:27.5px;top:842px;width:19px;">52</div>
<div class="bx" style="left:27.5px;top:852.5px;width:18.5px;height:1px;background:#dadada;"></div>
<div class="t rh" style="left:27.5px;top:853px;width:19px;">53</div>
<div class="bx" style="left:27.5px;top:863.5px;width:18.5px;height:1px;background:#dadada;"></div>
<div class="t rh" style="left:27.5px;top:864px;width:19px;">54</div>
<div class="bx" style="left:27.5px;top:874.5px;width:18.5px;height:1px;background:#dadada;"></div>
<div class="t rh" style="left:27.5px;top:875px;width:19px;">55</div>
<div class="bx" style="left:27.5px;top:885.5px;width:18.5px;height:1px;background:#dadada;"></div>
<div class="t rh" style="left:27.5px;top:886px;width:19px;">56</div>
<div class="bx" style="left:27.5px;top:896.5px;width:18.5px;height:1px;background:#dadada;"></div>
<div class="t rh" style="left:27.5px;top:897px;width:19px;">57</div>
<div class="bx" style="left:27.5px;top:907.5px;width:18.5px;height:1px;background:#dadada;"></div>
<div class="t rh" style="left:27.5px;top:908px;width:19px;">58</div>
<div class="bx" style="left:27.5px;top:918.5px;width:18.5px;height:1px;background:#dadada;"></div>
<div class="t rh" style="left:27.5px;top:919px;width:19px;">59</div>
<div class="bx" style="left:27.5px;top:929.5px;width:18.5px;height:1px;background:#dadada;"></div>
<div class="t rh" style="left:27.5px;top:930px;width:19px;">60</div>
<div class="bx" style="left:27.5px;top:940.5px;width:18.5px;height:1px;background:#dadada;"></div>
<div class="t rh" style="left:27.5px;top:941px;width:19px;">61</div>
<div class="bx" style="left:27.5px;top:951.5px;width:18.5px;height:1px;background:#dadada;"></div>
<div class="t rh" style="left:27.5px;top:952px;width:19px;">62</div>
<div class="bx" style="left:27.5px;top:962.5px;width:18.5px;height:1px;background:#dadada;"></div>
<div class="t rh" style="left:27.5px;top:963px;width:19px;">63</div>
<div class="bx" style="left:27.5px;top:973.5px;width:18.5px;height:1px;background:#dadada;"></div>
<div class="t rh" style="left:27.5px;top:974px;width:19px;">64</div>
<div class="bx" style="left:27.5px;top:984.5px;width:18.5px;height:1px;background:#dadada;"></div>
<div class="t rh" style="left:27.5px;top:985px;width:19px;">65</div>
<div class="bx" style="left:27.5px;top:995.5px;width:18.5px;height:1px;background:#dadada;"></div>
<div class="t rh" style="left:27.5px;top:996px;width:19px;">66</div>
<div class="bx" style="left:27.5px;top:1006.5px;width:18.5px;height:1px;background:#dadada;"></div>
<div class="t rh" style="left:27.5px;top:1007px;width:19px;">67</div>
<div class="bx" style="left:27.5px;top:1017.5px;width:18.5px;height:1px;background:#dadada;"></div>
<div class="t rh" style="left:27.5px;top:1018px;width:19px;">68</div>
<div class="bx" style="left:27.5px;top:1028.5px;width:18.5px;height:1px;background:#dadada;"></div>
<div class="t rh" style="left:27.5px;top:1029px;width:19px;">69</div>
<div class="bx" style="left:27.5px;top:1039.5px;width:18.5px;height:1px;background:#dadada;"></div>
<div class="t rh" style="left:27.5px;top:1040px;width:19px;">70</div>
<div class="bx" style="left:27.5px;top:1050.5px;width:18.5px;height:1px;background:#dadada;"></div>
<div class="t rh" style="left:27.5px;top:1051px;width:19px;">71</div>
<div class="bx" style="left:27.5px;top:1061.5px;width:18.5px;height:1px;background:#dadada;"></div>
<div class="t rh" style="left:27.5px;top:1062px;width:19px;">72</div>
<div class="bx" style="left:27.5px;top:1072.5px;width:18.5px;height:1px;background:#dadada;"></div>
<div class="t rh" style="left:27.5px;top:1073px;width:19px;">73</div>
<div class="bx" style="left:27.5px;top:1083.5px;width:18.5px;height:1px;background:#dadada;"></div>
<div class="t rh" style="left:27.5px;top:1084px;width:19px;">74</div>
<div class="bx" style="left:27.5px;top:1094.5px;width:18.5px;height:1px;background:#dadada;"></div>
<div class="t rh" style="left:27.5px;top:1095px;width:19px;">75</div>
<div class="bx" style="left:27.5px;top:1105.5px;width:18.5px;height:1px;background:#dadada;"></div>
<div class="t rh" style="left:27.5px;top:1106px;width:19px;">76</div>
<div class="bx" style="left:27.5px;top:1116.5px;width:18.5px;height:1px;background:#dadada;"></div>
<div class="t rh" style="left:27.5px;top:1117px;width:19px;">77</div>
<div class="bx" style="left:27.5px;top:1127.5px;width:18.5px;height:1px;background:#dadada;"></div>
<div class="t rh" style="left:27.5px;top:1128px;width:19px;">78</div>
<div class="bx" style="left:27.5px;top:1138.5px;width:18.5px;height:1px;background:#dadada;"></div>
<div class="t rh" style="left:27.5px;top:1139px;width:19px;">79</div>
<div class="bx" style="left:27.5px;top:1149.5px;width:18.5px;height:1px;background:#dadada;"></div>
<div class="t rh" style="left:27.5px;top:1150px;width:19px;">80</div>
<div class="bx" style="left:27.5px;top:1160.5px;width:18.5px;height:1px;background:#dadada;"></div>
<div class="t rh" style="left:27.5px;top:1161px;width:19px;">81</div>
<div class="bx" style="left:27.5px;top:1171.5px;width:18.5px;height:1px;background:#dadada;"></div>
<div class="t rh" style="left:27.5px;top:1172px;width:19px;">82</div>
<div class="bx" style="left:27.5px;top:1182.5px;width:18.5px;height:1px;background:#dadada;"></div>
<div class="t rh" style="left:27.5px;top:1183px;width:19px;">83</div>
<div class="bx" style="left:27.5px;top:1193.5px;width:18.5px;height:1px;background:#dadada;"></div>
<div class="t rh" style="left:27.5px;top:1194px;width:19px;">84</div>
<div class="bx" style="left:27.5px;top:1204.5px;width:18.5px;height:1px;background:#dadada;"></div>
<div class="t rh" style="left:27.5px;top:1205px;width:19px;">85</div>
<div class="bx" style="left:27.5px;top:1215.5px;width:18.5px;height:1px;background:#dadada;"></div>
<div class="t rh" style="left:27.5px;top:1216px;width:19px;">86</div>
<div class="bx" style="left:27.5px;top:1226.5px;width:18.5px;height:1px;background:#dadada;"></div>
<div class="t rh" style="left:27.5px;top:1227px;width:19px;">87</div>
<div class="bx" style="left:27.5px;top:1237.5px;width:18.5px;height:1px;background:#dadada;"></div>
<div class="t rh" style="left:27.5px;top:1238px;width:19px;">88</div>
<div class="bx" style="left:27.5px;top:1248.5px;width:18.5px;height:1px;background:#dadada;"></div>
<div class="t rh" style="left:27.5px;top:1249px;width:19px;">89</div>
<div class="bx" style="left:27.5px;top:1259.5px;width:18.5px;height:1px;background:#dadada;"></div>
<div class="t rh" style="left:27.5px;top:1260px;width:19px;">90</div>
<div class="bx" style="left:27.5px;top:1270.5px;width:18.5px;height:1px;background:#dadada;"></div>
<div class="t rh" style="left:27.5px;top:1271px;width:19px;">91</div>
<div class="bx" style="left:27.5px;top:1281.5px;width:18.5px;height:1px;background:#dadada;"></div>
<div class="t rh" style="left:27.5px;top:1282px;width:19px;">92</div>
<div class="bx" style="left:27.5px;top:1292.5px;width:18.5px;height:1px;background:#dadada;"></div>
<div class="t rh" style="left:27.5px;top:1293px;width:19px;">93</div>
<div class="bx" style="left:27.5px;top:1303.5px;width:18.5px;height:1px;background:#dadada;"></div>
<div class="t rh" style="left:27.5px;top:1304px;width:19px;">94</div>
<div class="bx" style="left:27.5px;top:1314.5px;width:18.5px;height:1px;background:#dadada;"></div>
<div class="t rh" style="left:27.5px;top:1315px;width:19px;">95</div>
<div class="bx" style="left:27.5px;top:1325.5px;width:18.5px;height:1px;background:#dadada;"></div>
<div class="t rh" style="left:27.5px;top:1326px;width:19px;">96</div>
<div class="bx" style="left:27.5px;top:1336.5px;width:18.5px;height:1px;background:#dadada;"></div>
<div class="t rh" style="left:27.5px;top:1337px;width:19px;">97</div>
<div class="bx" style="left:27.5px;top:1347.5px;width:18.5px;height:1px;background:#dadada;"></div>
<div class="t rh" style="left:27.5px;top:1348px;width:19px;">98</div>
<div class="bx" style="left:27.5px;top:1358.5px;width:18.5px;height:1px;background:#dadada;"></div>
<div class="t rh" style="left:27.5px;top:1359px;width:19px;">99</div>
<div class="bx" style="left:27.5px;top:1369.5px;width:18.5px;height:1px;background:#dadada;"></div>
<div class="t rh" style="left:27.5px;top:1370px;width:19px;">100</div>
<div class="bx" style="left:27.5px;top:1380.5px;width:18.5px;height:1px;background:#dadada;"></div>
<svg class="bx" style="left:38px;top:272px" width="8" height="9"><path d="M6.5 2.5v5h-5z" fill="#cfcfcf"/></svg>
<div class="bx" style="left:46px;top:282px;width:1px;height:1095px;background:#b5b5b5;"></div>
<div class="bx" style="left:27.5px;top:281.5px;width:982.5px;height:0.8px;background:#c8c8c8;"></div>
<div class="bx" style="left:47px;top:282px;width:963px;height:32px;background:#990000;"></div>
<div class="bx" style="left:47px;top:314px;width:963px;height:11px;background:#e6b8af;"></div>
<div class="bx" style="left:47px;top:325px;width:963px;height:1px;background:#f3dcd8;"></div>
<div class="bx" style="left:62px;top:336px;width:928.5px;height:44px;background:#e6b8af;"></div>
<div class="bx" style="left:62px;top:380px;width:928.5px;height:11px;background:#990000;"></div>
<div class="t b w" style="left:49.5px;top:281px;width:250px;">Operating Model</div>
<div class="t w" style="left:49.5px;top:292px;width:250px;">Restaurant Business</div>
<div class="t b c" style="left:310.5px;top:336px;width:68px;">Metric</div>
<div class="t b r" style="left:378.5px;top:336px;width:64px;">BOP</div>
<div class="t b r" style="left:378.5px;top:347px;width:64px;">EOP</div>
<div class="t b r" style="left:378.5px;top:358px;width:64px;">Days</div>
<div class="t b r" style="left:378.5px;top:369px;width:64px;">Year</div>
<div class="t c dt blue" style="left:446.5px;top:336px;width:68px;">1/01/2021</div>
<div class="t c dt" style="left:514.5px;top:336px;width:68px;">1/01/2022</div>
<div class="t c dt" style="left:582.5px;top:336px;width:68px;">1/01/2023</div>
<div class="t c dt" style="left:650.5px;top:336px;width:68px;">1/01/2024</div>
<div class="t c dt" style="left:718.5px;top:336px;width:68px;">1/01/2025</div>
<div class="t c dt" style="left:786.5px;top:336px;width:68px;">1/01/2026</div>
<div class="t c dt" style="left:854.5px;top:336px;width:68px;">1/01/2027</div>
<div class="t c dt" style="left:922.5px;top:336px;width:68px;">1/01/2028</div>
<div class="t c dt" style="left:446.5px;top:347px;width:68px;">31/12/2021</div>
<div class="t c dt" style="left:514.5px;top:347px;width:68px;">31/12/2022</div>
<div class="t c dt" style="left:582.5px;top:347px;width:68px;">31/12/2023</div>
<div class="t c dt" style="left:650.5px;top:347px;width:68px;">31/12/2024</div>
<div class="t c dt" style="left:718.5px;top:347px;width:68px;">31/12/2025</div>
<div class="t c dt" style="left:786.5px;top:347px;width:68px;">31/12/2026</div>
<div class="t c dt" style="left:854.5px;top:347px;width:68px;">31/12/2027</div>
<div class="t c dt" style="left:922.5px;top:347px;width:68px;">31/12/2028</div>
<div class="t c" style="left:446.5px;top:358px;width:68px;">365</div>
<div class="t c" style="left:514.5px;top:358px;width:68px;">365</div>
<div class="t c" style="left:582.5px;top:358px;width:68px;">365</div>
<div class="t c" style="left:650.5px;top:358px;width:68px;">366</div>
<div class="t c" style="left:718.5px;top:358px;width:68px;">365</div>
<div class="t c" style="left:786.5px;top:358px;width:68px;">365</div>
<div class="t c" style="left:854.5px;top:358px;width:68px;">365</div>
<div class="t c" style="left:922.5px;top:358px;width:68px;">366</div>
<div class="t c" style="left:446.5px;top:369px;width:68px;">2021</div>
<div class="t c" style="left:514.5px;top:369px;width:68px;">2022</div>
<div class="t c" style="left:582.5px;top:369px;width:68px;">2023</div>
<div class="t c" style="left:650.5px;top:369px;width:68px;">2024</div>
<div class="t c" style="left:718.5px;top:369px;width:68px;">2025</div>
<div class="t c" style="left:786.5px;top:369px;width:68px;">2026</div>
<div class="t c" style="left:854.5px;top:369px;width:68px;">2027</div>
<div class="t c" style="left:922.5px;top:369px;width:68px;">2028</div>
<div class="bx" style="left:62px;top:402px;width:928.5px;height:11px;background:#d9d9d9;"></div>
<div class="bx" style="left:62px;top:413px;width:928.5px;height:1px;background:#ebebeb;"></div>
<div class="t xs" style="left:49.3px;top:402px;width:10px;">x</div>
<div class="t b" style="left:65.3px;top:402px;width:300px;">1. Revenues Build-Up</div>
<div class="bx" style="left:62px;top:424px;width:928.5px;height:11px;background:#f2f2f2;"></div>
<div class="bx" style="left:62px;top:435px;width:928.5px;height:1px;background:#f8f8f8;"></div>
<div class="t xs" style="left:49.3px;top:424px;width:10px;">x</div>
<div class="t b" style="left:65.3px;top:424px;width:300px;">1.1 Lunch</div>
<div class="t " style="left:73.7px;top:435px;width:300px;">Average Ticket</div>
<div class="t c" style="left:310.5px;top:435px;width:68px;">USD / Client</div>
<div class="t g r" style="left:426.5px;top:435px;width:82.8px;">58</div>
<div class="t g r" style="left:494.5px;top:435px;width:82.8px;">55</div>
<div class="t g r" style="left:562.5px;top:435px;width:82.8px;">60</div>
<div class="t g r" style="left:630.5px;top:435px;width:82.8px;">62</div>
<div class="t g r" style="left:698.5px;top:435px;width:82.8px;">64</div>
<div class="t g r" style="left:766.5px;top:435px;width:82.8px;">66</div>
<div class="t g r" style="left:834.5px;top:435px;width:82.8px;">68</div>
<div class="t g r" style="left:902.5px;top:435px;width:82.8px;">70</div>
<div class="t " style="left:73.7px;top:446px;width:300px;">Occupancy</div>
<div class="t c" style="left:310.5px;top:446px;width:68px;">Clients / Day</div>
<div class="t g r" style="left:426.5px;top:446px;width:82.8px;">55</div>
<div class="t g r" style="left:494.5px;top:446px;width:82.8px;">34</div>
<div class="t g r" style="left:562.5px;top:446px;width:82.8px;">40</div>
<div class="t g r" style="left:630.5px;top:446px;width:82.8px;">65</div>
<div class="t g r" style="left:698.5px;top:446px;width:82.8px;">65</div>
<div class="t g r" style="left:766.5px;top:446px;width:82.8px;">78</div>
<div class="t g r" style="left:834.5px;top:446px;width:82.8px;">78</div>
<div class="t g r" style="left:902.5px;top:446px;width:82.8px;">78</div>
<div class="t " style="left:73.7px;top:457px;width:300px;">Days of Operation</div>
<div class="t c" style="left:310.5px;top:457px;width:68px;">Days</div>
<div class="t g r" style="left:426.5px;top:457px;width:82.8px;">125</div>
<div class="t g r" style="left:494.5px;top:457px;width:82.8px;">250</div>
<div class="t g r" style="left:562.5px;top:457px;width:82.8px;">300</div>
<div class="t g r" style="left:630.5px;top:457px;width:82.8px;">300</div>
<div class="t g r" style="left:698.5px;top:457px;width:82.8px;">300</div>
<div class="t g r" style="left:766.5px;top:457px;width:82.8px;">300</div>
<div class="t g r" style="left:834.5px;top:457px;width:82.8px;">300</div>
<div class="t g r" style="left:902.5px;top:457px;width:82.8px;">300</div>
<div class="bx" style="left:62px;top:468px;width:948px;height:1px;background:#000;"></div>
<div class="t b" style="left:65.3px;top:468px;width:300px;">Revenue from Lunch</div>
<div class="t b c" style="left:309.5px;top:468px;width:68px;">USD / Client</div>
<div class="t b r" style="left:426.5px;top:468px;width:80.8px;">398,750</div>
<div class="t b r" style="left:494.5px;top:468px;width:80.8px;">467,500</div>
<div class="t b r" style="left:562.5px;top:468px;width:80.8px;">720,000</div>
<div class="t b r" style="left:630.5px;top:468px;width:80.8px;">1,205,100</div>
<div class="t b r" style="left:698.5px;top:468px;width:80.8px;">1,241,253</div>
<div class="t b r" style="left:766.5px;top:468px;width:80.8px;">1,534,189</div>
<div class="t b r" style="left:834.5px;top:468px;width:80.8px;">1,580,214</div>
<div class="t b r" style="left:902.5px;top:468px;width:80.8px;">1,627,621</div>
<div class="bx" style="left:62px;top:490px;width:928.5px;height:11px;background:#f2f2f2;"></div>
<div class="bx" style="left:62px;top:501px;width:928.5px;height:1px;background:#f8f8f8;"></div>
<div class="t xs" style="left:49.3px;top:490px;width:10px;">x</div>
<div class="t b" style="left:65.3px;top:490px;width:300px;">1.2 Dinner</div>
<div class="t " style="left:73.7px;top:501px;width:300px;">Average Ticket</div>
<div class="t c" style="left:310.5px;top:501px;width:68px;">USD / Clients</div>
<div class="t g r" style="left:426.5px;top:501px;width:82.8px;">58</div>
<div class="t g r" style="left:494.5px;top:501px;width:82.8px;">55</div>
<div class="t g r" style="left:562.5px;top:501px;width:82.8px;">60</div>
<div class="t g r" style="left:630.5px;top:501px;width:82.8px;">62</div>
<div class="t g r" style="left:698.5px;top:501px;width:82.8px;">64</div>
<div class="t g r" style="left:766.5px;top:501px;width:82.8px;">66</div>
<div class="t g r" style="left:834.5px;top:501px;width:82.8px;">68</div>
<div class="t g r" style="left:902.5px;top:501px;width:82.8px;">70</div>
<div class="t " style="left:73.7px;top:512px;width:300px;">Occupancy</div>
<div class="t c" style="left:310.5px;top:512px;width:68px;">Clients / Day</div>
<div class="t g r" style="left:426.5px;top:512px;width:82.8px;">60</div>
<div class="t g r" style="left:494.5px;top:512px;width:82.8px;">12</div>
<div class="t g r" style="left:562.5px;top:512px;width:82.8px;">18</div>
<div class="t g r" style="left:630.5px;top:512px;width:82.8px;">33</div>
<div class="t g r" style="left:698.5px;top:512px;width:82.8px;">39</div>
<div class="t g r" style="left:766.5px;top:512px;width:82.8px;">52</div>
<div class="t g r" style="left:834.5px;top:512px;width:82.8px;">52</div>
<div class="t g r" style="left:902.5px;top:512px;width:82.8px;">52</div>
<div class="t " style="left:73.7px;top:523px;width:300px;">Days of Operation</div>
<div class="t c" style="left:310.5px;top:523px;width:68px;">Days</div>
<div class="t g r" style="left:426.5px;top:523px;width:82.8px;">125</div>
<div class="t g r" style="left:494.5px;top:523px;width:82.8px;">250</div>
<div class="t g r" style="left:562.5px;top:523px;width:82.8px;">300</div>
<div class="t g r" style="left:630.5px;top:523px;width:82.8px;">300</div>
<div class="t g r" style="left:698.5px;top:523px;width:82.8px;">300</div>
<div class="t g r" style="left:766.5px;top:523px;width:82.8px;">300</div>
<div class="t g r" style="left:834.5px;top:523px;width:82.8px;">300</div>
<div class="t g r" style="left:902.5px;top:523px;width:82.8px;">300</div>
<div class="bx" style="left:62px;top:534px;width:948px;height:1px;background:#000;"></div>
<div class="t b" style="left:65.3px;top:534px;width:300px;">Revenue from Dinner</div>
<div class="t b c" style="left:309.5px;top:534px;width:68px;">USD</div>
<div class="t b r" style="left:426.5px;top:534px;width:80.8px;">435,000</div>
<div class="t b r" style="left:494.5px;top:534px;width:80.8px;">165,000</div>
<div class="t b r" style="left:562.5px;top:534px;width:80.8px;">324,000</div>
<div class="t b r" style="left:630.5px;top:534px;width:80.8px;">602,550</div>
<div class="t b r" style="left:698.5px;top:534px;width:80.8px;">744,752</div>
<div class="t b r" style="left:766.5px;top:534px;width:80.8px;">1,022,792</div>
<div class="t b r" style="left:834.5px;top:534px;width:80.8px;">1,053,476</div>
<div class="t b r" style="left:902.5px;top:534px;width:80.8px;">1,085,081</div>
<div class="bx" style="left:62px;top:556px;width:928.5px;height:11px;background:#f2f2f2;"></div>
<div class="bx" style="left:62px;top:567px;width:928.5px;height:1px;background:#f8f8f8;"></div>
<div class="t xs" style="left:49.3px;top:556px;width:10px;">x</div>
<div class="t b" style="left:65.3px;top:556px;width:300px;">1.3 Drinks</div>
<div class="t " style="left:73.7px;top:567px;width:300px;">Average Ticket</div>
<div class="t c" style="left:310.5px;top:567px;width:68px;">USD&nbsp; / Client</div>
<div class="t g r" style="left:426.5px;top:567px;width:82.8px;">17.50</div>
<div class="t g r" style="left:494.5px;top:567px;width:82.8px;">15.00</div>
<div class="t g r" style="left:562.5px;top:567px;width:82.8px;">18.00</div>
<div class="t g r" style="left:630.5px;top:567px;width:82.8px;">18.54</div>
<div class="t g r" style="left:698.5px;top:567px;width:82.8px;">19.10</div>
<div class="t g r" style="left:766.5px;top:567px;width:82.8px;">19.67</div>
<div class="t g r" style="left:834.5px;top:567px;width:82.8px;">20.26</div>
<div class="t g r" style="left:902.5px;top:567px;width:82.8px;">20.87</div>
<div class="t " style="left:73.7px;top:578px;width:300px;">Occupancy</div>
<div class="t c" style="left:310.5px;top:578px;width:68px;">Clients / Day</div>
<div class="t g r" style="left:426.5px;top:578px;width:82.8px;">115</div>
<div class="t g r" style="left:494.5px;top:578px;width:82.8px;">46</div>
<div class="t g r" style="left:562.5px;top:578px;width:82.8px;">58</div>
<div class="t g r" style="left:630.5px;top:578px;width:82.8px;">98</div>
<div class="t g r" style="left:698.5px;top:578px;width:82.8px;">104</div>
<div class="t g r" style="left:766.5px;top:578px;width:82.8px;">130</div>
<div class="t g r" style="left:834.5px;top:578px;width:82.8px;">130</div>
<div class="t g r" style="left:902.5px;top:578px;width:82.8px;">130</div>
<div class="t " style="left:73.7px;top:589px;width:300px;">Days of Operation</div>
<div class="t c" style="left:310.5px;top:589px;width:68px;">Days</div>
<div class="t g r" style="left:426.5px;top:589px;width:82.8px;">125</div>
<div class="t g r" style="left:494.5px;top:589px;width:82.8px;">250</div>
<div class="t g r" style="left:562.5px;top:589px;width:82.8px;">300</div>
<div class="t g r" style="left:630.5px;top:589px;width:82.8px;">300</div>
<div class="t g r" style="left:698.5px;top:589px;width:82.8px;">300</div>
<div class="t g r" style="left:766.5px;top:589px;width:82.8px;">300</div>
<div class="t g r" style="left:834.5px;top:589px;width:82.8px;">300</div>
<div class="t g r" style="left:902.5px;top:589px;width:82.8px;">300</div>
<div class="bx" style="left:62px;top:600px;width:948px;height:1px;background:#000;"></div>
<div class="t b" style="left:65.3px;top:600px;width:300px;">Revenue from Drinks</div>
<div class="t b c" style="left:309.5px;top:600px;width:68px;">USD</div>
<div class="t b r" style="left:426.5px;top:600px;width:80.8px;">251,563</div>
<div class="t b r" style="left:494.5px;top:600px;width:80.8px;">172,500</div>
<div class="t b r" style="left:562.5px;top:600px;width:80.8px;">313,200</div>
<div class="t b r" style="left:630.5px;top:600px;width:80.8px;">542,295</div>
<div class="t b r" style="left:698.5px;top:600px;width:80.8px;">595,801</div>
<div class="t b r" style="left:766.5px;top:600px;width:80.8px;">767,094</div>
<div class="t b r" style="left:834.5px;top:600px;width:80.8px;">790,107</div>
<div class="t b r" style="left:902.5px;top:600px;width:80.8px;">813,810</div>
<div class="bx" style="left:62px;top:622px;width:928.5px;height:11px;background:#f2f2f2;"></div>
<div class="bx" style="left:62px;top:633px;width:928.5px;height:1px;background:#f8f8f8;"></div>
<div class="t xs" style="left:49.3px;top:622px;width:10px;">x</div>
<div class="t b" style="left:65.3px;top:622px;width:300px;">1.4 Delivery</div>
<div class="t " style="left:73.7px;top:633px;width:300px;">Average Ticket</div>
<div class="t c" style="left:310.5px;top:633px;width:68px;">USD&nbsp; / Client</div>
<div class="t g r" style="left:426.5px;top:633px;width:82.8px;">0.00</div>
<div class="t g r" style="left:494.5px;top:633px;width:82.8px;">348.00</div>
<div class="t g r" style="left:562.5px;top:633px;width:82.8px;">200.00</div>
<div class="t g r" style="left:630.5px;top:633px;width:82.8px;">206.00</div>
<div class="t g r" style="left:698.5px;top:633px;width:82.8px;">212.18</div>
<div class="t g r" style="left:766.5px;top:633px;width:82.8px;">218.55</div>
<div class="t g r" style="left:834.5px;top:633px;width:82.8px;">225.10</div>
<div class="t g r" style="left:902.5px;top:633px;width:82.8px;">231.85</div>
<div class="t " style="left:73.7px;top:644px;width:300px;">Orders</div>
<div class="t c" style="left:310.5px;top:644px;width:68px;"># / Month</div>
<div class="t g r" style="left:426.5px;top:644px;width:82.8px;">0</div>
<div class="t g r" style="left:494.5px;top:644px;width:82.8px;">154</div>
<div class="t g r" style="left:562.5px;top:644px;width:82.8px;">150</div>
<div class="t g r" style="left:630.5px;top:644px;width:82.8px;">150</div>
<div class="t g r" style="left:698.5px;top:644px;width:82.8px;">150</div>
<div class="t g r" style="left:766.5px;top:644px;width:82.8px;">150</div>
<div class="t g r" style="left:834.5px;top:644px;width:82.8px;">150</div>
<div class="t g r" style="left:902.5px;top:644px;width:82.8px;">150</div>
<div class="t " style="left:73.7px;top:655px;width:300px;">Months During Period</div>
<div class="t c" style="left:310.5px;top:655px;width:68px;">Months</div>
<div class="t g r" style="left:426.5px;top:655px;width:82.8px;">0</div>
<div class="t g r" style="left:494.5px;top:655px;width:82.8px;">3</div>
<div class="t g r" style="left:562.5px;top:655px;width:82.8px;">12</div>
<div class="t g r" style="left:630.5px;top:655px;width:82.8px;">12</div>
<div class="t g r" style="left:698.5px;top:655px;width:82.8px;">12</div>
<div class="t g r" style="left:766.5px;top:655px;width:82.8px;">12</div>
<div class="t g r" style="left:834.5px;top:655px;width:82.8px;">12</div>
<div class="t g r" style="left:902.5px;top:655px;width:82.8px;">12</div>
<div class="bx" style="left:62px;top:666px;width:948px;height:1px;background:#000;"></div>
<div class="t b" style="left:65.3px;top:666px;width:300px;">Revenue from Delivery</div>
<div class="t b c" style="left:309.5px;top:666px;width:68px;">USD</div>
<div class="t b r" style="left:426.5px;top:666px;width:80.8px;">0</div>
<div class="t b r" style="left:494.5px;top:666px;width:80.8px;">160,254</div>
<div class="t b r" style="left:562.5px;top:666px;width:80.8px;">360,000</div>
<div class="t b r" style="left:630.5px;top:666px;width:80.8px;">370,800</div>
<div class="t b r" style="left:698.5px;top:666px;width:80.8px;">381,924</div>
<div class="t b r" style="left:766.5px;top:666px;width:80.8px;">393,382</div>
<div class="t b r" style="left:834.5px;top:666px;width:80.8px;">405,183</div>
<div class="t b r" style="left:902.5px;top:666px;width:80.8px;">417,339</div>
<div class="bx" style="left:62px;top:688px;width:928.5px;height:11px;background:#f2f2f2;"></div>
<div class="bx" style="left:62px;top:699px;width:928.5px;height:1px;background:#f8f8f8;"></div>
<div class="t xs" style="left:49.3px;top:688px;width:10px;">x</div>
<div class="t b" style="left:65.3px;top:688px;width:300px;">Total Revenue</div>
<div class="t b c" style="left:309.5px;top:688px;width:68px;">USD</div>
<div class="t b r" style="left:426.5px;top:688px;width:84.4px;">1,085,313</div>
<div class="t b r" style="left:494.5px;top:688px;width:80.8px;">965,254</div>
<div class="t b r" style="left:562.5px;top:688px;width:80.8px;">1,717,200</div>
<div class="t b r" style="left:630.5px;top:688px;width:80.8px;">2,720,745</div>
<div class="t b r" style="left:698.5px;top:688px;width:80.8px;">2,963,730</div>
<div class="t b r" style="left:766.5px;top:688px;width:80.8px;">3,717,457</div>
<div class="t b r" style="left:834.5px;top:688px;width:80.8px;">3,828,981</div>
<div class="t b r" style="left:902.5px;top:688px;width:80.8px;">3,943,850</div>
<div class="bx" style="left:62px;top:710px;width:928.5px;height:11px;background:#d9d9d9;"></div>
<div class="bx" style="left:62px;top:721px;width:928.5px;height:1px;background:#ebebeb;"></div>
<div class="t xs" style="left:49.3px;top:710px;width:10px;">x</div>
<div class="t b" style="left:65.3px;top:710px;width:300px;">2. COGS</div>
<div class="bx" style="left:62px;top:732px;width:928.5px;height:11px;background:#f2f2f2;"></div>
<div class="bx" style="left:62px;top:743px;width:928.5px;height:1px;background:#f8f8f8;"></div>
<div class="t xs" style="left:49.3px;top:732px;width:10px;">x</div>
<div class="t b" style="left:65.3px;top:732px;width:300px;">2.1. Production Costs</div>
<div class="t " style="left:73.7px;top:743px;width:300px;">Food Margin</div>
<div class="t c" style="left:310.5px;top:743px;width:68px;">% of Ticket</div>
<div class="t g r" style="left:426.5px;top:743px;width:82.8px;">22.0%</div>
<div class="t g r" style="left:494.5px;top:743px;width:82.8px;">27.0%</div>
<div class="t g r" style="left:562.5px;top:743px;width:82.8px;">23.0%</div>
<div class="t g r" style="left:630.5px;top:743px;width:82.8px;">23.0%</div>
<div class="t g r" style="left:698.5px;top:743px;width:82.8px;">23.0%</div>
<div class="t g r" style="left:766.5px;top:743px;width:82.8px;">23.0%</div>
<div class="t g r" style="left:834.5px;top:743px;width:82.8px;">23.0%</div>
<div class="t g r" style="left:902.5px;top:743px;width:82.8px;">23.0%</div>
<div class="bx" style="left:62px;top:754px;width:928.5px;height:1px;background:#000;"></div>
<div class="t b" style="left:65.3px;top:754px;width:300px;">Food Cost</div>
<div class="t b c" style="left:309.5px;top:754px;width:68px;">USD</div>
<div class="t b r" style="left:426.5px;top:754px;width:84.6px;">(183,425)</div>
<div class="t b r" style="left:494.5px;top:754px;width:84.6px;">(170,775)</div>
<div class="t b r" style="left:562.5px;top:754px;width:84.6px;">(240,120)</div>
<div class="t b r" style="left:630.5px;top:754px;width:84.6px;">(415,760)</div>
<div class="t b r" style="left:698.5px;top:754px;width:84.6px;">(456,781)</div>
<div class="t b r" style="left:766.5px;top:754px;width:84.6px;">(588,106)</div>
<div class="t b r" style="left:834.5px;top:754px;width:84.6px;">(605,749)</div>
<div class="t b r" style="left:902.5px;top:754px;width:84.6px;">(623,921)</div>
<div class="t " style="left:73.7px;top:776px;width:300px;">Drinks Margin</div>
<div class="t c" style="left:310.5px;top:776px;width:68px;">% of Ticket</div>
<div class="t g r" style="left:426.5px;top:776px;width:82.8px;">33.0%</div>
<div class="t g r" style="left:494.5px;top:776px;width:82.8px;">38.0%</div>
<div class="t g r" style="left:562.5px;top:776px;width:82.8px;">34.0%</div>
<div class="t g r" style="left:630.5px;top:776px;width:82.8px;">34.0%</div>
<div class="t g r" style="left:698.5px;top:776px;width:82.8px;">34.0%</div>
<div class="t g r" style="left:766.5px;top:776px;width:82.8px;">34.0%</div>
<div class="t g r" style="left:834.5px;top:776px;width:82.8px;">34.0%</div>
<div class="t g r" style="left:902.5px;top:776px;width:82.8px;">34.0%</div>
<div class="bx" style="left:62px;top:787px;width:928.5px;height:1px;background:#000;"></div>
<div class="t b" style="left:65.3px;top:787px;width:300px;">Drinks Cost</div>
<div class="t b c" style="left:309.5px;top:787px;width:68px;">USD</div>
<div class="t b r" style="left:426.5px;top:787px;width:84.6px;">(83,016)</div>
<div class="t b r" style="left:494.5px;top:787px;width:84.6px;">(65,550)</div>
<div class="t b r" style="left:562.5px;top:787px;width:84.6px;">(106,488)</div>
<div class="t b r" style="left:630.5px;top:787px;width:84.6px;">(184,380)</div>
<div class="t b r" style="left:698.5px;top:787px;width:84.6px;">(202,572)</div>
<div class="t b r" style="left:766.5px;top:787px;width:84.6px;">(260,812)</div>
<div class="t b r" style="left:834.5px;top:787px;width:84.6px;">(268,636)</div>
<div class="t b r" style="left:902.5px;top:787px;width:84.6px;">(276,696)</div>
<div class="t " style="left:73.7px;top:809px;width:300px;">Food Margin</div>
<div class="t c" style="left:310.5px;top:809px;width:68px;">% of Ticket</div>
<div class="t g r" style="left:426.5px;top:809px;width:82.8px;">–</div>
<div class="t g r" style="left:494.5px;top:809px;width:82.8px;">31.0%</div>
<div class="t g r" style="left:562.5px;top:809px;width:82.8px;">29.0%</div>
<div class="t g r" style="left:630.5px;top:809px;width:82.8px;">29.0%</div>
<div class="t g r" style="left:698.5px;top:809px;width:82.8px;">29.0%</div>
<div class="t g r" style="left:766.5px;top:809px;width:82.8px;">29.0%</div>
<div class="t g r" style="left:834.5px;top:809px;width:82.8px;">29.0%</div>
<div class="t g r" style="left:902.5px;top:809px;width:82.8px;">29.0%</div>
<div class="bx" style="left:62px;top:820px;width:928.5px;height:1px;background:#000;"></div>
<div class="t b" style="left:65.3px;top:820px;width:300px;">Delivery Cost</div>
<div class="t b c" style="left:309.5px;top:820px;width:68px;">USD</div>
<div class="t b r" style="left:426.5px;top:820px;width:80.8px;">0</div>
<div class="t b r" style="left:494.5px;top:820px;width:84.6px;">(49,679)</div>
<div class="t b r" style="left:562.5px;top:820px;width:84.6px;">(104,400)</div>
<div class="t b r" style="left:630.5px;top:820px;width:84.6px;">(107,532)</div>
<div class="t b r" style="left:698.5px;top:820px;width:84.6px;">(110,758)</div>
<div class="t b r" style="left:766.5px;top:820px;width:84.6px;">(114,081)</div>
<div class="t b r" style="left:834.5px;top:820px;width:84.6px;">(117,503)</div>
<div class="t b r" style="left:902.5px;top:820px;width:84.6px;">(121,028)</div>
<div class="t " style="left:65.3px;top:842px;width:300px;">Gas</div>
<div class="t c" style="left:310.5px;top:842px;width:68px;">USD</div>
<div class="t r" style="left:426.5px;top:842px;width:85.8px;">(25,096)</div>
<div class="t r" style="left:494.5px;top:842px;width:85.8px;">(16,754)</div>
<div class="t r" style="left:562.5px;top:842px;width:85.8px;">(29,806)</div>
<div class="t r" style="left:630.5px;top:842px;width:85.8px;">(47,225)</div>
<div class="t r" style="left:698.5px;top:842px;width:85.8px;">(51,443)</div>
<div class="t r" style="left:766.5px;top:842px;width:85.8px;">(64,526)</div>
<div class="t r" style="left:834.5px;top:842px;width:85.8px;">(66,461)</div>
<div class="t r" style="left:902.5px;top:842px;width:85.8px;">(68,455)</div>
<div class="t " style="left:65.3px;top:853px;width:300px;">Cleaning Supplies</div>
<div class="t c" style="left:310.5px;top:853px;width:68px;">USD</div>
<div class="t r" style="left:426.5px;top:853px;width:85.8px;">(12,010)</div>
<div class="t r" style="left:494.5px;top:853px;width:85.8px;">(19,700)</div>
<div class="t r" style="left:562.5px;top:853px;width:85.8px;">(35,046)</div>
<div class="t r" style="left:630.5px;top:853px;width:85.8px;">(55,527)</div>
<div class="t r" style="left:698.5px;top:853px;width:85.8px;">(60,486)</div>
<div class="t r" style="left:766.5px;top:853px;width:85.8px;">(75,869)</div>
<div class="t r" style="left:834.5px;top:853px;width:85.8px;">(78,145)</div>
<div class="t r" style="left:902.5px;top:853px;width:85.8px;">(80,490)</div>
<div class="t " style="left:65.3px;top:864px;width:300px;">Other Supplies</div>
<div class="t c" style="left:310.5px;top:864px;width:68px;">USD</div>
<div class="t r" style="left:426.5px;top:864px;width:85.8px;">(21,568)</div>
<div class="t r" style="left:494.5px;top:864px;width:85.8px;">(5,650)</div>
<div class="t r" style="left:562.5px;top:864px;width:85.8px;">(10,051)</div>
<div class="t r" style="left:630.5px;top:864px;width:85.8px;">(15,924)</div>
<div class="t r" style="left:698.5px;top:864px;width:85.8px;">(17,346)</div>
<div class="t r" style="left:766.5px;top:864px;width:85.8px;">(21,758)</div>
<div class="t r" style="left:834.5px;top:864px;width:85.8px;">(22,411)</div>
<div class="t r" style="left:902.5px;top:864px;width:85.8px;">(23,083)</div>
<div class="t " style="left:65.3px;top:875px;width:300px;">Uniforms</div>
<div class="t c" style="left:310.5px;top:875px;width:68px;">USD</div>
<div class="t r" style="left:426.5px;top:875px;width:85.8px;">(2,728)</div>
<div class="t r" style="left:494.5px;top:875px;width:85.8px;">(2,888)</div>
<div class="t r" style="left:562.5px;top:875px;width:85.8px;">(5,138)</div>
<div class="t r" style="left:630.5px;top:875px;width:85.8px;">(8,141)</div>
<div class="t r" style="left:698.5px;top:875px;width:85.8px;">(8,868)</div>
<div class="t r" style="left:766.5px;top:875px;width:85.8px;">(11,124)</div>
<div class="t r" style="left:834.5px;top:875px;width:85.8px;">(11,457)</div>
<div class="t r" style="left:902.5px;top:875px;width:85.8px;">(11,801)</div>
<div class="bx" style="left:62px;top:886px;width:928.5px;height:1px;background:#000;"></div>
<div class="t b" style="left:65.3px;top:886px;width:300px;">Other Costs</div>
<div class="t b c" style="left:309.5px;top:886px;width:68px;">USD</div>
<div class="t b r" style="left:426.5px;top:886px;width:84.6px;">(61,402)</div>
<div class="t b r" style="left:494.5px;top:886px;width:84.6px;">(44,992)</div>
<div class="t b r" style="left:562.5px;top:886px;width:84.6px;">(80,041)</div>
<div class="t b r" style="left:630.5px;top:886px;width:84.6px;">(126,818)</div>
<div class="t b r" style="left:698.5px;top:886px;width:84.6px;">(138,144)</div>
<div class="t b r" style="left:766.5px;top:886px;width:84.6px;">(173,276)</div>
<div class="t b r" style="left:834.5px;top:886px;width:84.6px;">(178,475)</div>
<div class="t b r" style="left:902.5px;top:886px;width:84.6px;">(183,829)</div>
<div class="bx" style="left:62px;top:908px;width:928.5px;height:11px;background:#f2f2f2;"></div>
<div class="bx" style="left:62px;top:919px;width:928.5px;height:1px;background:#f8f8f8;"></div>
<div class="t xs b" style="left:49.3px;top:908px;width:10px;">x</div>
<div class="t b" style="left:65.3px;top:908px;width:300px;">Total COGS</div>
<div class="t b c" style="left:309.5px;top:908px;width:68px;">USD</div>
<div class="t b r" style="left:426.5px;top:908px;width:84.6px;">(327,843)</div>
<div class="t b r" style="left:494.5px;top:908px;width:84.6px;">(330,996)</div>
<div class="t b r" style="left:562.5px;top:908px;width:84.6px;">(531,049)</div>
<div class="t b r" style="left:630.5px;top:908px;width:84.6px;">(834,490)</div>
<div class="t b r" style="left:698.5px;top:908px;width:84.6px;">(908,256)</div>
<div class="t b r" style="left:766.5px;top:908px;width:84.6px;">(1,136,275)</div>
<div class="t b r" style="left:834.5px;top:908px;width:84.6px;">(1,170,363)</div>
<div class="t b r" style="left:902.5px;top:908px;width:84.6px;">(1,205,474)</div>
<div class="bx" style="left:62px;top:930px;width:928.5px;height:11px;background:#d9d9d9;"></div>
<div class="bx" style="left:62px;top:941px;width:928.5px;height:1px;background:#ebebeb;"></div>
<div class="t xs" style="left:49.3px;top:930px;width:10px;">x</div>
<div class="t b" style="left:65.3px;top:930px;width:300px;">3. Sales, General and Administrative Expenses</div>
<div class="bx" style="left:62px;top:952px;width:928.5px;height:11px;background:#f2f2f2;"></div>
<div class="bx" style="left:62px;top:963px;width:928.5px;height:1px;background:#f8f8f8;"></div>
<div class="t xs" style="left:49.3px;top:952px;width:10px;">x</div>
<div class="t b" style="left:65.3px;top:952px;width:300px;">3.1. Sales Expenses</div>
<div class="t " style="left:73.7px;top:963px;width:300px;">Sales</div>
<div class="t c" style="left:310.5px;top:963px;width:68px;">% of Revenues</div>
<div class="t g r" style="left:426.5px;top:963px;width:82.8px;">0.6%</div>
<div class="t g r" style="left:494.5px;top:963px;width:82.8px;">3.1%</div>
<div class="t g r" style="left:562.5px;top:963px;width:82.8px;">1.8%</div>
<div class="t g r" style="left:630.5px;top:963px;width:82.8px;">1.5%</div>
<div class="t g r" style="left:698.5px;top:963px;width:82.8px;">1.0%</div>
<div class="t g r" style="left:766.5px;top:963px;width:82.8px;">1.0%</div>
<div class="t g r" style="left:834.5px;top:963px;width:82.8px;">1.0%</div>
<div class="t g r" style="left:902.5px;top:963px;width:82.8px;">1.0%</div>
<div class="bx" style="left:62px;top:974px;width:928.5px;height:1px;background:#000;"></div>
<div class="t b" style="left:65.3px;top:974px;width:300px;">Total Cost</div>
<div class="t b c" style="left:309.5px;top:974px;width:68px;">USD</div>
<div class="t b r" style="left:426.5px;top:974px;width:84.6px;">(6,041)</div>
<div class="t b r" style="left:494.5px;top:974px;width:84.6px;">(29,643)</div>
<div class="t b r" style="left:562.5px;top:974px;width:84.6px;">(31,147)</div>
<div class="t b r" style="left:630.5px;top:974px;width:84.6px;">(40,811)</div>
<div class="t b r" style="left:698.5px;top:974px;width:84.6px;">(29,637)</div>
<div class="t b r" style="left:766.5px;top:974px;width:84.6px;">(37,175)</div>
<div class="t b r" style="left:834.5px;top:974px;width:84.6px;">(38,290)</div>
<div class="t b r" style="left:902.5px;top:974px;width:84.6px;">(39,439)</div>
<div class="bx" style="left:62px;top:996px;width:928.5px;height:11px;background:#f2f2f2;"></div>
<div class="bx" style="left:62px;top:1007px;width:928.5px;height:1px;background:#f8f8f8;"></div>
<div class="t xs" style="left:49.3px;top:996px;width:10px;">x</div>
<div class="t b" style="left:65.3px;top:996px;width:300px;">3.2. Labor</div>
<div class="t " style="left:73.7px;top:1007px;width:300px;">Average Compensation</div>
<div class="t c" style="left:310.5px;top:1007px;width:68px;">USD&nbsp; / Month</div>
<div class="t g r" style="left:426.5px;top:1007px;width:85.8px;">(1,548)</div>
<div class="t g r" style="left:494.5px;top:1007px;width:85.8px;">(2,345)</div>
<div class="t g r" style="left:562.5px;top:1007px;width:85.8px;">(2,404)</div>
<div class="t g r" style="left:630.5px;top:1007px;width:85.8px;">(2,476)</div>
<div class="t g r" style="left:698.5px;top:1007px;width:85.8px;">(2,550)</div>
<div class="t g r" style="left:766.5px;top:1007px;width:85.8px;">(2,627)</div>
<div class="t g r" style="left:834.5px;top:1007px;width:85.8px;">(2,706)</div>
<div class="t g r" style="left:902.5px;top:1007px;width:85.8px;">(2,787)</div>
<div class="t " style="left:73.7px;top:1018px;width:300px;">Employees</div>
<div class="t b c" style="left:309.5px;top:1018px;width:68px;">#</div>
<div class="t g r" style="left:426.5px;top:1018px;width:82.8px;">18</div>
<div class="t g r" style="left:494.5px;top:1018px;width:82.8px;">13</div>
<div class="t g r" style="left:562.5px;top:1018px;width:82.8px;">15</div>
<div class="t g r" style="left:630.5px;top:1018px;width:82.8px;">20</div>
<div class="t g r" style="left:698.5px;top:1018px;width:82.8px;">25</div>
<div class="t g r" style="left:766.5px;top:1018px;width:82.8px;">25</div>
<div class="t g r" style="left:834.5px;top:1018px;width:82.8px;">25</div>
<div class="t g r" style="left:902.5px;top:1018px;width:82.8px;">25</div>
<div class="bx" style="left:62px;top:1029px;width:928.5px;height:1px;background:#000;"></div>
<div class="t b" style="left:65.3px;top:1029px;width:300px;">Labor Expense</div>
<div class="t b c" style="left:309.5px;top:1029px;width:68px;">USD</div>
<div class="t b r" style="left:426.5px;top:1029px;width:84.6px;">(167,172)</div>
<div class="t b r" style="left:494.5px;top:1029px;width:84.6px;">(365,849)</div>
<div class="t b r" style="left:562.5px;top:1029px;width:84.6px;">(432,687)</div>
<div class="t b r" style="left:630.5px;top:1029px;width:84.6px;">(594,223)</div>
<div class="t b r" style="left:698.5px;top:1029px;width:84.6px;">(765,062)</div>
<div class="t b r" style="left:766.5px;top:1029px;width:84.6px;">(788,014)</div>
<div class="t b r" style="left:834.5px;top:1029px;width:84.6px;">(811,655)</div>
<div class="t b r" style="left:902.5px;top:1029px;width:84.6px;">(836,004)</div>
<div class="bx" style="left:62px;top:1051px;width:928.5px;height:11px;background:#f2f2f2;"></div>
<div class="bx" style="left:62px;top:1062px;width:928.5px;height:1px;background:#f8f8f8;"></div>
<div class="t xs" style="left:49.3px;top:1051px;width:10px;">x</div>
<div class="t b" style="left:65.3px;top:1051px;width:300px;">3.3. Electricity</div>
<div class="t " style="left:73.7px;top:1062px;width:300px;">Electricity</div>
<div class="t c" style="left:310.5px;top:1062px;width:68px;">% of Revenues</div>
<div class="t g b r" style="left:426.5px;top:1062px;width:81.5px;">0.7%</div>
<div class="t g b r" style="left:494.5px;top:1062px;width:81.5px;">2.0%</div>
<div class="t g b r" style="left:562.5px;top:1062px;width:81.5px;">2.0%</div>
<div class="t g b r" style="left:630.5px;top:1062px;width:81.5px;">2.0%</div>
<div class="t g b r" style="left:698.5px;top:1062px;width:81.5px;">2.0%</div>
<div class="t g b r" style="left:766.5px;top:1062px;width:81.5px;">2.0%</div>
<div class="t g b r" style="left:834.5px;top:1062px;width:81.5px;">2.0%</div>
<div class="t g b r" style="left:902.5px;top:1062px;width:81.5px;">2.0%</div>
<div class="t b" style="left:65.3px;top:1073px;width:300px;">Electricity Expense</div>
<div class="t b c" style="left:309.5px;top:1073px;width:68px;">USD</div>
<div class="t b r" style="left:426.5px;top:1073px;width:84.6px;">(8,055)</div>
<div class="t b r" style="left:494.5px;top:1073px;width:84.6px;">(19,445)</div>
<div class="t b r" style="left:562.5px;top:1073px;width:84.6px;">(34,594)</div>
<div class="t b r" style="left:630.5px;top:1073px;width:84.6px;">(54,811)</div>
<div class="t b r" style="left:698.5px;top:1073px;width:84.6px;">(59,706)</div>
<div class="t b r" style="left:766.5px;top:1073px;width:84.6px;">(74,890)</div>
<div class="t b r" style="left:834.5px;top:1073px;width:84.6px;">(77,136)</div>
<div class="t b r" style="left:902.5px;top:1073px;width:84.6px;">(79,451)</div>
<div class="bx" style="left:62px;top:1095px;width:928.5px;height:11px;background:#f2f2f2;"></div>
<div class="bx" style="left:62px;top:1106px;width:928.5px;height:1px;background:#f8f8f8;"></div>
<div class="t xs" style="left:49.3px;top:1095px;width:10px;">x</div>
<div class="t b" style="left:65.3px;top:1095px;width:300px;">3.4. Facility Improvements</div>
<div class="t " style="left:73.7px;top:1106px;width:300px;">Facility Improvement</div>
<div class="t c" style="left:310.5px;top:1106px;width:68px;">% of Revenues</div>
<div class="t g b r" style="left:426.5px;top:1106px;width:81.5px;">22.7%</div>
<div class="t g b r" style="left:494.5px;top:1106px;width:81.5px;">0.1%</div>
<div class="t g b r" style="left:562.5px;top:1106px;width:81.5px;">3.0%</div>
<div class="t g b r" style="left:630.5px;top:1106px;width:81.5px;">3.0%</div>
<div class="t g b r" style="left:698.5px;top:1106px;width:81.5px;">3.0%</div>
<div class="t g b r" style="left:766.5px;top:1106px;width:81.5px;">3.0%</div>
<div class="t g b r" style="left:834.5px;top:1106px;width:81.5px;">3.0%</div>
<div class="t g b r" style="left:902.5px;top:1106px;width:81.5px;">3.0%</div>
<div class="t b" style="left:65.3px;top:1117px;width:300px;">Electricity Expense</div>
<div class="t b c" style="left:309.5px;top:1117px;width:68px;">USD</div>
<div class="t b r" style="left:426.5px;top:1117px;width:84.6px;">(246,174)</div>
<div class="t b r" style="left:494.5px;top:1117px;width:84.6px;">(641)</div>
<div class="t b r" style="left:562.5px;top:1117px;width:84.6px;">(51,516)</div>
<div class="t b r" style="left:630.5px;top:1117px;width:84.6px;">(81,622)</div>
<div class="t b r" style="left:698.5px;top:1117px;width:84.6px;">(88,912)</div>
<div class="t b r" style="left:766.5px;top:1117px;width:84.6px;">(111,524)</div>
<div class="t b r" style="left:834.5px;top:1117px;width:84.6px;">(114,869)</div>
<div class="t b r" style="left:902.5px;top:1117px;width:84.6px;">(118,316)</div>
<div class="bx" style="left:62px;top:1139px;width:928.5px;height:11px;background:#f2f2f2;"></div>
<div class="bx" style="left:62px;top:1150px;width:928.5px;height:1px;background:#f8f8f8;"></div>
<div class="t xs" style="left:49.3px;top:1139px;width:10px;">x</div>
<div class="t b" style="left:65.3px;top:1139px;width:300px;">3.5. Other Expesnes</div>
<div class="t " style="left:73.7px;top:1150px;width:300px;">Facility Improvement</div>
<div class="t c" style="left:310.5px;top:1150px;width:68px;">% of Revenues</div>
<div class="t g b r" style="left:426.5px;top:1150px;width:81.5px;">6.4%</div>
<div class="t g b r" style="left:494.5px;top:1150px;width:81.5px;">6.7%</div>
<div class="t g b r" style="left:562.5px;top:1150px;width:81.5px;">6.7%</div>
<div class="t g b r" style="left:630.5px;top:1150px;width:81.5px;">6.7%</div>
<div class="t g b r" style="left:698.5px;top:1150px;width:81.5px;">6.7%</div>
<div class="t g b r" style="left:766.5px;top:1150px;width:81.5px;">6.7%</div>
<div class="t g b r" style="left:834.5px;top:1150px;width:81.5px;">6.7%</div>
<div class="t g b r" style="left:902.5px;top:1150px;width:81.5px;">6.7%</div>
<div class="t b" style="left:65.3px;top:1161px;width:300px;">Electricity Expense</div>
<div class="t b c" style="left:309.5px;top:1161px;width:68px;">USD</div>
<div class="t b r" style="left:426.5px;top:1161px;width:84.6px;">(69,755)</div>
<div class="t b r" style="left:494.5px;top:1161px;width:84.6px;">(65,032)</div>
<div class="t b r" style="left:562.5px;top:1161px;width:84.6px;">(115,693)</div>
<div class="t b r" style="left:630.5px;top:1161px;width:84.6px;">(183,305)</div>
<div class="t b r" style="left:698.5px;top:1161px;width:84.6px;">(199,676)</div>
<div class="t b r" style="left:766.5px;top:1161px;width:84.6px;">(250,456)</div>
<div class="t b r" style="left:834.5px;top:1161px;width:84.6px;">(257,970)</div>
<div class="t b r" style="left:902.5px;top:1161px;width:84.6px;">(265,709)</div>
<div class="bx" style="left:62px;top:1183px;width:928.5px;height:11px;background:#f2f2f2;"></div>
<div class="bx" style="left:62px;top:1194px;width:928.5px;height:1px;background:#f8f8f8;"></div>
<div class="t xs" style="left:49.3px;top:1183px;width:10px;">x</div>
<div class="t b" style="left:65.3px;top:1183px;width:300px;">3.6. Other Fixed Expenses</div>
<div class="t " style="left:73.7px;top:1194px;width:300px;">Rent</div>
<div class="t c" style="left:310.5px;top:1194px;width:68px;">USD</div>
<div class="t g r" style="left:426.5px;top:1194px;width:85.8px;">(18,000)</div>
<div class="t g r" style="left:494.5px;top:1194px;width:85.8px;">(36,000)</div>
<div class="t g r" style="left:562.5px;top:1194px;width:85.8px;">(36,000)</div>
<div class="t g r" style="left:630.5px;top:1194px;width:85.8px;">(36,000)</div>
<div class="t g r" style="left:698.5px;top:1194px;width:85.8px;">(36,000)</div>
<div class="t g r" style="left:766.5px;top:1194px;width:85.8px;">(36,000)</div>
<div class="t g r" style="left:834.5px;top:1194px;width:85.8px;">(36,000)</div>
<div class="t g r" style="left:902.5px;top:1194px;width:85.8px;">(36,000)</div>
<div class="t " style="left:73.7px;top:1205px;width:300px;">Water, Telephone, Internet and Security</div>
<div class="t c" style="left:310.5px;top:1205px;width:68px;">USD</div>
<div class="t g r" style="left:426.5px;top:1205px;width:85.8px;">(11,074)</div>
<div class="t g r" style="left:494.5px;top:1205px;width:85.8px;">(8,700)</div>
<div class="t g r" style="left:562.5px;top:1205px;width:85.8px;">(10,000)</div>
<div class="t g r" style="left:630.5px;top:1205px;width:85.8px;">(10,300)</div>
<div class="t g r" style="left:698.5px;top:1205px;width:85.8px;">(10,609)</div>
<div class="t g r" style="left:766.5px;top:1205px;width:85.8px;">(10,927)</div>
<div class="t g r" style="left:834.5px;top:1205px;width:85.8px;">(11,255)</div>
<div class="t g r" style="left:902.5px;top:1205px;width:85.8px;">(11,593)</div>
<div class="t " style="left:73.7px;top:1216px;width:300px;">Insurance</div>
<div class="t c" style="left:310.5px;top:1216px;width:68px;">USD</div>
<div class="t g r" style="left:426.5px;top:1216px;width:85.8px;">(879)</div>
<div class="t g r" style="left:494.5px;top:1216px;width:85.8px;">(1,278)</div>
<div class="t g r" style="left:562.5px;top:1216px;width:85.8px;">(1,310)</div>
<div class="t g r" style="left:630.5px;top:1216px;width:85.8px;">(1,349)</div>
<div class="t g r" style="left:698.5px;top:1216px;width:85.8px;">(1,390)</div>
<div class="t g r" style="left:766.5px;top:1216px;width:85.8px;">(1,431)</div>
<div class="t g r" style="left:834.5px;top:1216px;width:85.8px;">(1,474)</div>
<div class="t g r" style="left:902.5px;top:1216px;width:85.8px;">(1,519)</div>
<div class="t " style="left:73.7px;top:1227px;width:300px;">Facility Improvements</div>
<div class="t c" style="left:310.5px;top:1227px;width:68px;">USD</div>
<div class="t g r" style="left:426.5px;top:1227px;width:85.8px;">(1)</div>
<div class="t g r" style="left:494.5px;top:1227px;width:85.8px;">(0)</div>
<div class="t g r" style="left:562.5px;top:1227px;width:85.8px;">(0)</div>
<div class="t g r" style="left:630.5px;top:1227px;width:85.8px;">(0)</div>
<div class="t g r" style="left:698.5px;top:1227px;width:85.8px;">(0)</div>
<div class="t g r" style="left:766.5px;top:1227px;width:85.8px;">(0)</div>
<div class="t g r" style="left:834.5px;top:1227px;width:85.8px;">(0)</div>
<div class="t g r" style="left:902.5px;top:1227px;width:85.8px;">(0)</div>
<div class="t " style="left:73.7px;top:1238px;width:300px;">Payment Systems</div>
<div class="t c" style="left:310.5px;top:1238px;width:68px;">USD</div>
<div class="t g r" style="left:426.5px;top:1238px;width:85.8px;">(1,409)</div>
<div class="t g r" style="left:494.5px;top:1238px;width:85.8px;">(2,818)</div>
<div class="t g r" style="left:562.5px;top:1238px;width:85.8px;">(2,888)</div>
<div class="t g r" style="left:630.5px;top:1238px;width:85.8px;">(2,975)</div>
<div class="t g r" style="left:698.5px;top:1238px;width:85.8px;">(3,064)</div>
<div class="t g r" style="left:766.5px;top:1238px;width:85.8px;">(3,156)</div>
<div class="t g r" style="left:834.5px;top:1238px;width:85.8px;">(3,251)</div>
<div class="t g r" style="left:902.5px;top:1238px;width:85.8px;">(3,348)</div>
<div class="t " style="left:73.7px;top:1249px;width:300px;">Grease Trap Maintenance</div>
<div class="t c" style="left:310.5px;top:1249px;width:68px;">USD</div>
<div class="t g r" style="left:426.5px;top:1249px;width:85.8px;">(750)</div>
<div class="t g r" style="left:494.5px;top:1249px;width:85.8px;">(750)</div>
<div class="t g r" style="left:562.5px;top:1249px;width:85.8px;">(769)</div>
<div class="t g r" style="left:630.5px;top:1249px;width:85.8px;">(792)</div>
<div class="t g r" style="left:698.5px;top:1249px;width:85.8px;">(816)</div>
<div class="t g r" style="left:766.5px;top:1249px;width:85.8px;">(840)</div>
<div class="t g r" style="left:834.5px;top:1249px;width:85.8px;">(865)</div>
<div class="t g r" style="left:902.5px;top:1249px;width:85.8px;">(891)</div>
<div class="t " style="left:73.7px;top:1260px;width:300px;">Equipment Maintenance</div>
<div class="t c" style="left:310.5px;top:1260px;width:68px;">USD</div>
<div class="t g r" style="left:426.5px;top:1260px;width:82.8px;">0</div>
<div class="t g r" style="left:494.5px;top:1260px;width:85.8px;">(3,800)</div>
<div class="t g r" style="left:562.5px;top:1260px;width:85.8px;">(3,895)</div>
<div class="t g r" style="left:630.5px;top:1260px;width:85.8px;">(4,012)</div>
<div class="t g r" style="left:698.5px;top:1260px;width:85.8px;">(4,132)</div>
<div class="t g r" style="left:766.5px;top:1260px;width:85.8px;">(4,256)</div>
<div class="t g r" style="left:834.5px;top:1260px;width:85.8px;">(4,384)</div>
<div class="t g r" style="left:902.5px;top:1260px;width:85.8px;">(4,515)</div>
<div class="bx" style="left:62px;top:1271px;width:928.5px;height:1px;background:#000;"></div>
<div class="t b" style="left:65.3px;top:1271px;width:300px;">Total Other Expeneses</div>
<div class="t b c" style="left:309.5px;top:1271px;width:68px;">USD</div>
<div class="t b r" style="left:426.5px;top:1271px;width:84.6px;">(32,113)</div>
<div class="t b r" style="left:494.5px;top:1271px;width:84.6px;">(53,346)</div>
<div class="t b r" style="left:562.5px;top:1271px;width:84.6px;">(54,862)</div>
<div class="t b r" style="left:630.5px;top:1271px;width:84.6px;">(55,428)</div>
<div class="t b r" style="left:698.5px;top:1271px;width:84.6px;">(56,011)</div>
<div class="t b r" style="left:766.5px;top:1271px;width:84.6px;">(56,611)</div>
<div class="t b r" style="left:834.5px;top:1271px;width:84.6px;">(57,230)</div>
<div class="t b r" style="left:902.5px;top:1271px;width:84.6px;">(57,867)</div>
<div class="bx" style="left:446px;top:270px;width:1px;height:1107px;background:#9a9a9a;"></div>
<div class="bx" style="left:0px;top:390.5px;width:1172px;height:1px;background:#9a9a9a;"></div>
<div class="bx" style="left:582px;top:336px;width:0;height:957px;border-left:1px dotted #222;"></div>
<div class="bx" style="left:2px;top:270.5px;width:10.5px;height:10.5px;border:1px solid #8f8f8f;box-sizing:border-box;background:#f1f1f1;"></div>
<div class="bx" style="left:13px;top:270.5px;width:11px;height:10.5px;border:1px solid #8f8f8f;box-sizing:border-box;background:#f1f1f1;"></div>
<div class="t ol" style="left:2px;top:270.5px;width:10.5px;">1</div>
<div class="t ol" style="left:13px;top:270.5px;width:11px;">2</div>
<div class="bx" style="left:4.3px;top:412px;width:1.3px;height:283px;background:#b0b0b0;"></div>
<div class="bx" style="left:4.3px;top:694px;width:4.7px;height:1.2px;background:#b0b0b0;"></div>
<div class="bx" style="left:2.3px;top:402.3px;width:10.5px;height:10.4px;border:1px solid #8f8f8f;box-sizing:border-box;background:#f1f1f1;"></div>
<div class="bx" style="left:4.1px;top:406.6px;width:7.1px;height:1.9px;background:#555;"></div>
<div class="bx" style="left:15.2px;top:418px;width:1.4px;height:1.4px;background:#b4b4b4;"></div>
<div class="bx" style="left:15.2px;top:429px;width:1.4px;height:1.4px;background:#b4b4b4;"></div>
<div class="bx" style="left:15.2px;top:440px;width:1.4px;height:1.4px;background:#b4b4b4;"></div>
<div class="bx" style="left:15.2px;top:451px;width:1.4px;height:1.4px;background:#b4b4b4;"></div>
<div class="bx" style="left:15.2px;top:462px;width:1.4px;height:1.4px;background:#b4b4b4;"></div>
<div class="bx" style="left:15.2px;top:473px;width:1.4px;height:1.4px;background:#b4b4b4;"></div>
<div class="bx" style="left:15.2px;top:484px;width:1.4px;height:1.4px;background:#b4b4b4;"></div>
<div class="bx" style="left:15.2px;top:495px;width:1.4px;height:1.4px;background:#b4b4b4;"></div>
<div class="bx" style="left:15.2px;top:506px;width:1.4px;height:1.4px;background:#b4b4b4;"></div>
<div class="bx" style="left:15.2px;top:517px;width:1.4px;height:1.4px;background:#b4b4b4;"></div>
<div class="bx" style="left:15.2px;top:528px;width:1.4px;height:1.4px;background:#b4b4b4;"></div>
<div class="bx" style="left:15.2px;top:539px;width:1.4px;height:1.4px;background:#b4b4b4;"></div>
<div class="bx" style="left:15.2px;top:550px;width:1.4px;height:1.4px;background:#b4b4b4;"></div>
<div class="bx" style="left:15.2px;top:561px;width:1.4px;height:1.4px;background:#b4b4b4;"></div>
<div class="bx" style="left:15.2px;top:572px;width:1.4px;height:1.4px;background:#b4b4b4;"></div>
<div class="bx" style="left:15.2px;top:583px;width:1.4px;height:1.4px;background:#b4b4b4;"></div>
<div class="bx" style="left:15.2px;top:594px;width:1.4px;height:1.4px;background:#b4b4b4;"></div>
<div class="bx" style="left:15.2px;top:605px;width:1.4px;height:1.4px;background:#b4b4b4;"></div>
<div class="bx" style="left:15.2px;top:616px;width:1.4px;height:1.4px;background:#b4b4b4;"></div>
<div class="bx" style="left:15.2px;top:627px;width:1.4px;height:1.4px;background:#b4b4b4;"></div>
<div class="bx" style="left:15.2px;top:638px;width:1.4px;height:1.4px;background:#b4b4b4;"></div>
<div class="bx" style="left:15.2px;top:649px;width:1.4px;height:1.4px;background:#b4b4b4;"></div>
<div class="bx" style="left:15.2px;top:660px;width:1.4px;height:1.4px;background:#b4b4b4;"></div>
<div class="bx" style="left:15.2px;top:671px;width:1.4px;height:1.4px;background:#b4b4b4;"></div>
<div class="bx" style="left:15.2px;top:682px;width:1.4px;height:1.4px;background:#b4b4b4;"></div>
<div class="bx" style="left:15.2px;top:693px;width:1.4px;height:1.4px;background:#b4b4b4;"></div>
<div class="bx" style="left:4.3px;top:720px;width:1.3px;height:195px;background:#b0b0b0;"></div>
<div class="bx" style="left:4.3px;top:914px;width:4.7px;height:1.2px;background:#b0b0b0;"></div>
<div class="bx" style="left:2.3px;top:710.3px;width:10.5px;height:10.4px;border:1px solid #8f8f8f;box-sizing:border-box;background:#f1f1f1;"></div>
<div class="bx" style="left:4.1px;top:714.6px;width:7.1px;height:1.9px;background:#555;"></div>
<div class="bx" style="left:15.2px;top:726px;width:1.4px;height:1.4px;background:#b4b4b4;"></div>
<div class="bx" style="left:15.2px;top:737px;width:1.4px;height:1.4px;background:#b4b4b4;"></div>
<div class="bx" style="left:15.2px;top:748px;width:1.4px;height:1.4px;background:#b4b4b4;"></div>
<div class="bx" style="left:15.2px;top:759px;width:1.4px;height:1.4px;background:#b4b4b4;"></div>
<div class="bx" style="left:15.2px;top:770px;width:1.4px;height:1.4px;background:#b4b4b4;"></div>
<div class="bx" style="left:15.2px;top:781px;width:1.4px;height:1.4px;background:#b4b4b4;"></div>
<div class="bx" style="left:15.2px;top:792px;width:1.4px;height:1.4px;background:#b4b4b4;"></div>
<div class="bx" style="left:15.2px;top:803px;width:1.4px;height:1.4px;background:#b4b4b4;"></div>
<div class="bx" style="left:15.2px;top:814px;width:1.4px;height:1.4px;background:#b4b4b4;"></div>
<div class="bx" style="left:15.2px;top:825px;width:1.4px;height:1.4px;background:#b4b4b4;"></div>
<div class="bx" style="left:15.2px;top:836px;width:1.4px;height:1.4px;background:#b4b4b4;"></div>
<div class="bx" style="left:15.2px;top:847px;width:1.4px;height:1.4px;background:#b4b4b4;"></div>
<div class="bx" style="left:15.2px;top:858px;width:1.4px;height:1.4px;background:#b4b4b4;"></div>
<div class="bx" style="left:15.2px;top:869px;width:1.4px;height:1.4px;background:#b4b4b4;"></div>
<div class="bx" style="left:15.2px;top:880px;width:1.4px;height:1.4px;background:#b4b4b4;"></div>
<div class="bx" style="left:15.2px;top:891px;width:1.4px;height:1.4px;background:#b4b4b4;"></div>
<div class="bx" style="left:15.2px;top:902px;width:1.4px;height:1.4px;background:#b4b4b4;"></div>
<div class="bx" style="left:15.2px;top:913px;width:1.4px;height:1.4px;background:#b4b4b4;"></div>
<div class="bx" style="left:4.3px;top:940px;width:1.3px;height:338px;background:#b0b0b0;"></div>
<div class="bx" style="left:4.3px;top:1277px;width:4.7px;height:1.2px;background:#b0b0b0;"></div>
<div class="bx" style="left:2.3px;top:930.3px;width:10.5px;height:10.4px;border:1px solid #8f8f8f;box-sizing:border-box;background:#f1f1f1;"></div>
<div class="bx" style="left:4.1px;top:934.6px;width:7.1px;height:1.9px;background:#555;"></div>
<div class="bx" style="left:15.2px;top:946px;width:1.4px;height:1.4px;background:#b4b4b4;"></div>
<div class="bx" style="left:15.2px;top:957px;width:1.4px;height:1.4px;background:#b4b4b4;"></div>
<div class="bx" style="left:15.2px;top:968px;width:1.4px;height:1.4px;background:#b4b4b4;"></div>
<div class="bx" style="left:15.2px;top:979px;width:1.4px;height:1.4px;background:#b4b4b4;"></div>
<div class="bx" style="left:15.2px;top:990px;width:1.4px;height:1.4px;background:#b4b4b4;"></div>
<div class="bx" style="left:15.2px;top:1001px;width:1.4px;height:1.4px;background:#b4b4b4;"></div>
<div class="bx" style="left:15.2px;top:1012px;width:1.4px;height:1.4px;background:#b4b4b4;"></div>
<div class="bx" style="left:15.2px;top:1023px;width:1.4px;height:1.4px;background:#b4b4b4;"></div>
<div class="bx" style="left:15.2px;top:1034px;width:1.4px;height:1.4px;background:#b4b4b4;"></div>
<div class="bx" style="left:15.2px;top:1045px;width:1.4px;height:1.4px;background:#b4b4b4;"></div>
<div class="bx" style="left:15.2px;top:1056px;width:1.4px;height:1.4px;background:#b4b4b4;"></div>
<div class="bx" style="left:15.2px;top:1067px;width:1.4px;height:1.4px;background:#b4b4b4;"></div>
<div class="bx" style="left:15.2px;top:1078px;width:1.4px;height:1.4px;background:#b4b4b4;"></div>
<div class="bx" style="left:15.2px;top:1089px;width:1.4px;height:1.4px;background:#b4b4b4;"></div>
<div class="bx" style="left:15.2px;top:1100px;width:1.4px;height:1.4px;background:#b4b4b4;"></div>
<div class="bx" style="left:15.2px;top:1111px;width:1.4px;height:1.4px;background:#b4b4b4;"></div>
<div class="bx" style="left:15.2px;top:1122px;width:1.4px;height:1.4px;background:#b4b4b4;"></div>
<div class="bx" style="left:15.2px;top:1133px;width:1.4px;height:1.4px;background:#b4b4b4;"></div>
<div class="bx" style="left:15.2px;top:1144px;width:1.4px;height:1.4px;background:#b4b4b4;"></div>
<div class="bx" style="left:15.2px;top:1155px;width:1.4px;height:1.4px;background:#b4b4b4;"></div>
<div class="bx" style="left:15.2px;top:1166px;width:1.4px;height:1.4px;background:#b4b4b4;"></div>
<div class="bx" style="left:15.2px;top:1177px;width:1.4px;height:1.4px;background:#b4b4b4;"></div>
<div class="bx" style="left:15.2px;top:1188px;width:1.4px;height:1.4px;background:#b4b4b4;"></div>
<div class="bx" style="left:15.2px;top:1199px;width:1.4px;height:1.4px;background:#b4b4b4;"></div>
<div class="bx" style="left:15.2px;top:1210px;width:1.4px;height:1.4px;background:#b4b4b4;"></div>
<div class="bx" style="left:15.2px;top:1221px;width:1.4px;height:1.4px;background:#b4b4b4;"></div>
<div class="bx" style="left:15.2px;top:1232px;width:1.4px;height:1.4px;background:#b4b4b4;"></div>
<div class="bx" style="left:15.2px;top:1243px;width:1.4px;height:1.4px;background:#b4b4b4;"></div>
<div class="bx" style="left:15.2px;top:1254px;width:1.4px;height:1.4px;background:#b4b4b4;"></div>
<div class="bx" style="left:15.2px;top:1265px;width:1.4px;height:1.4px;background:#b4b4b4;"></div>
<div class="bx" style="left:15.2px;top:1276px;width:1.4px;height:1.4px;background:#b4b4b4;"></div>
</div>
<div class="bx" style="left:0.00px;top:1377.00px;width:1172.00px;height:40.00px;background:#f0f0f0;"></div>
<div class="bx" style="left:0.00px;top:1417.00px;width:1172.00px;height:26.00px;background:#f4f4f4;"></div>
<div class="bx" style="left:0.00px;top:1443.00px;width:1172.00px;height:10.00px;background:#1b1b1b;"></div>
<div class="bx" style="left:350.50px;top:1376.00px;width:157.50px;height:36.00px;background:#fff;border-radius:0 0 7px 7px;box-shadow:0 0.5px 1.5px rgba(0,0,0,0.2);"></div>
<div class="bx" style="left:350.50px;top:1376.50px;width:157.50px;height:3.50px;background:#fff;"></div>
<div class="bx" style="left:361.00px;top:1407.00px;width:135.40px;height:2.00px;background:#1a7343;border-radius:1px;"></div>
<div class="bx" style="left:141.00px;top:1382.20px;width:66.00px;height:29.60px;background:#c00000;border-radius:5px;"></div>
<div class="rt" style="left:152.30px;top:1389.35px;font-size:17.30px;line-height:17.30px;color:#fff;letter-spacing:-0.430px;">Cover</div>
<div class="rt" style="left:230.00px;top:1389.35px;font-size:17.30px;line-height:17.30px;color:#333;">Assumptions</div>
<div class="rt" style="left:361.30px;top:1386.20px;font-size:17.60px;line-height:17.60px;color:#222;letter-spacing:0.325px;-webkit-text-stroke:0.45px #222;">Operating Model</div>
<div class="rt" style="left:527.60px;top:1389.35px;font-size:17.30px;line-height:17.30px;color:#333;letter-spacing:-2.104px;">FS</div>
<div class="rt" style="left:577.00px;top:1389.35px;font-size:17.30px;line-height:17.30px;color:#333;letter-spacing:0.364px;">Debt</div>
<div class="rt" style="left:646.50px;top:1389.35px;font-size:17.30px;line-height:17.30px;color:#333;letter-spacing:-1.019px;">DCF</div>
<div class="bx" style="left:212.50px;top:1386.00px;width:1.00px;height:22.00px;background:#d0d0d0;"></div>
<div class="bx" style="left:345.30px;top:1386.00px;width:1.00px;height:22.00px;background:#d0d0d0;"></div>
<div class="bx" style="left:512.10px;top:1386.00px;width:1.00px;height:22.00px;background:#d0d0d0;"></div>
<div class="bx" style="left:561.10px;top:1386.00px;width:1.00px;height:22.00px;background:#d0d0d0;"></div>
<div class="bx" style="left:631.10px;top:1386.00px;width:1.00px;height:22.00px;background:#d0d0d0;"></div>
<div class="bx" style="left:694.30px;top:1386.00px;width:1.00px;height:22.00px;background:#d0d0d0;"></div>
<div class="rt" style="left:9.20px;top:1425.65px;font-size:12.70px;line-height:12.70px;color:#3a3a3a;letter-spacing:-0.182px;">Ready</div>
<div class="rt" style="left:92.00px;top:1425.65px;font-size:12.70px;line-height:12.70px;color:#3a3a3a;letter-spacing:0.014px;">Accessibility: Investigate</div>
<svg class="bx" style="left:0;top:1370px" width="1172" height="83" viewBox="0 1370 1172 83" fill="none" stroke-linecap="round" stroke-linejoin="round">
<path d="M39 1389.600l-6 6 6 6" stroke="#b9b9b9" stroke-width="1.400"/>
<path d="M73 1389.600l6 6-6 6" stroke="#b9b9b9" stroke-width="1.400"/>
<path d="M754.500 1387.800v15.400M746.800 1395.500h15.400" stroke="#333" stroke-width="1.500"/>
<g stroke="#3a3a3a" stroke-width="1.200">
<circle cx="78.600" cy="1424.400" r="2"/>
<path d="M71.200 1427.600c2.600 1.100 5 1.500 7.400 1.500s4.800-.4 7.400-1.500"/>
<path d="M75.700 1429.200v3.800l-3.500 6.200M81.500 1429.200v3.400l1.300 2.200"/>
<path d="M78.600 1434.200l-2.400 5"/>
<path d="M81.600 1434.400l5.400 5.400M87 1434.400l-5.400 5.400"/>
</g>
</svg>
</div>
</body></html>
